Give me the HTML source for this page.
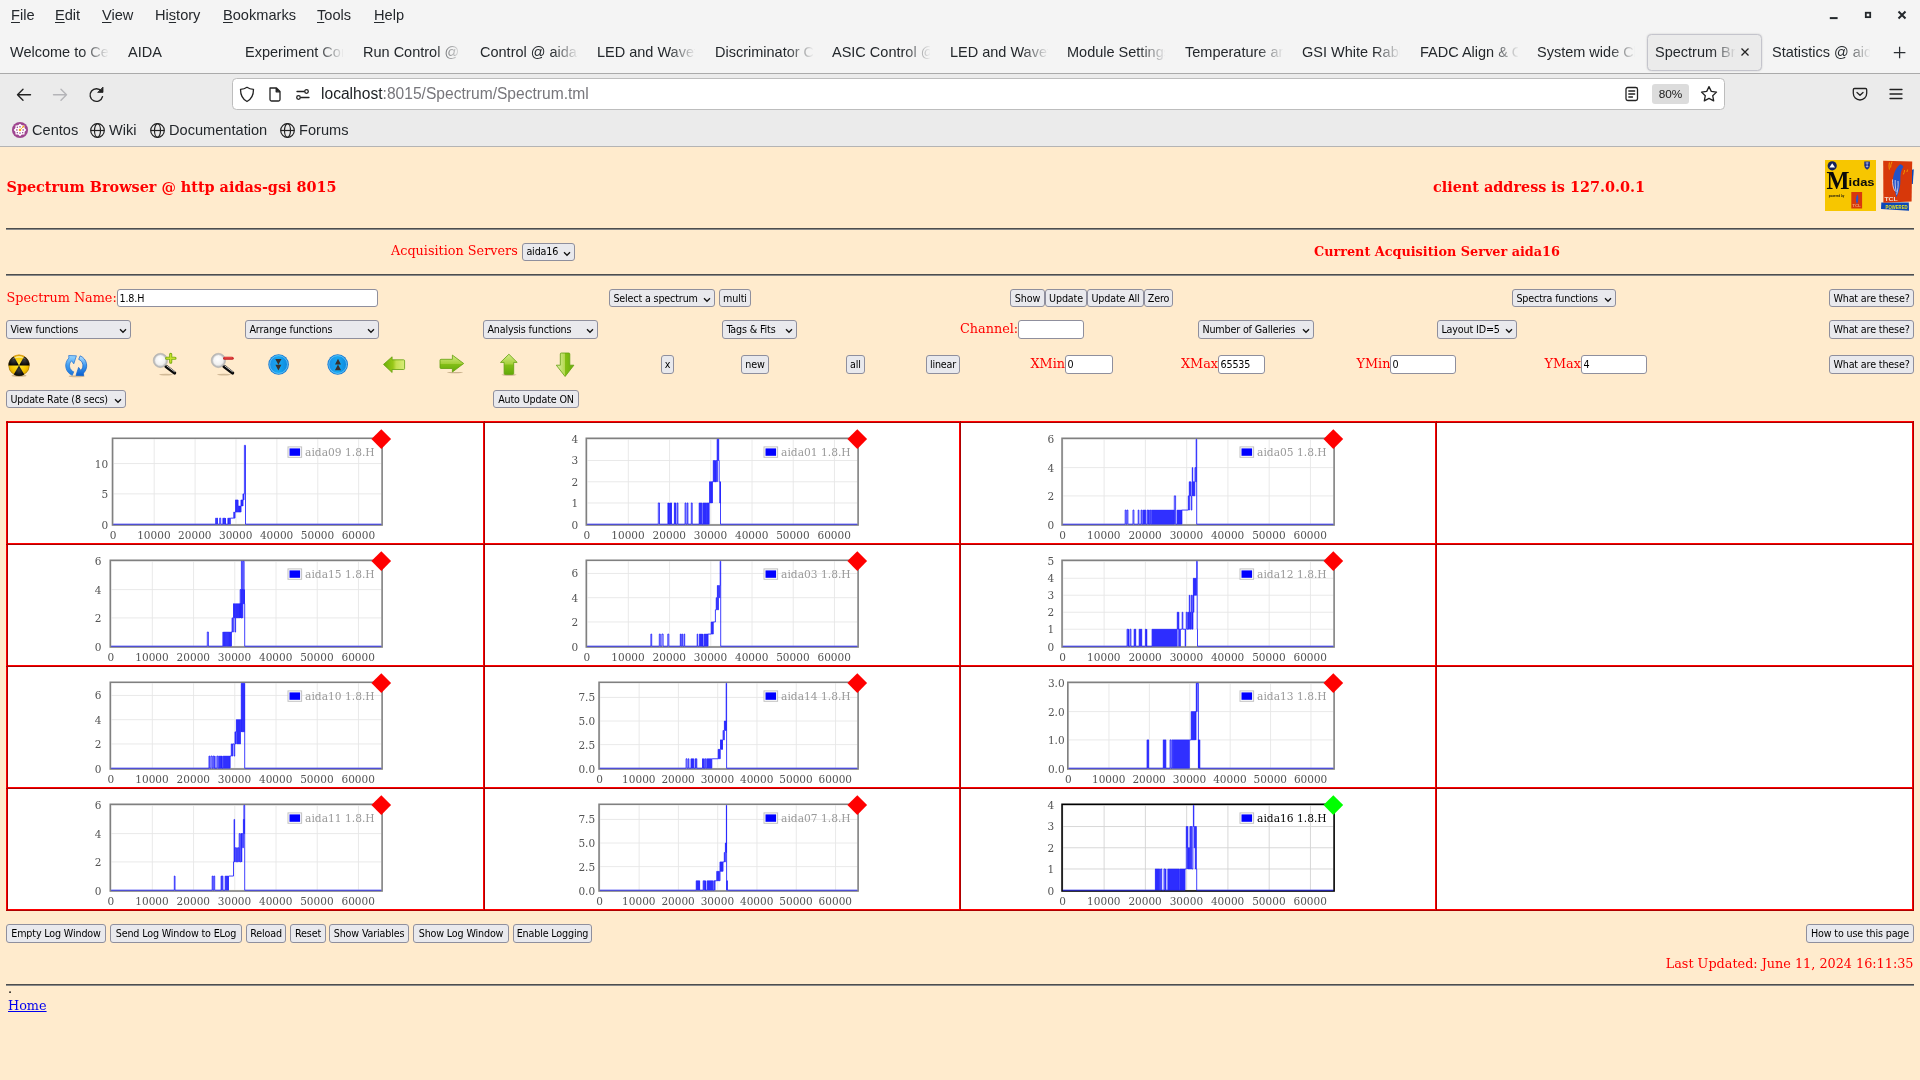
<!DOCTYPE html>
<html lang="en"><head><meta charset="utf-8"><title>Spectrum Browser</title>
<style>
html,body{margin:0;padding:0;}
body{width:1920px;height:1080px;overflow:hidden;position:relative;background:#ffebcd;font-family:"DejaVu Serif","Liberation Serif",serif;font-size:12.8px;color:#000;}
#root{position:absolute;left:0;top:0;width:1920px;height:1080px;overflow:hidden;will-change:transform;}
.abs{position:absolute;white-space:nowrap;}
/* browser chrome */
#chrome{position:absolute;left:0;top:0;width:1920px;height:147px;font-family:"Liberation Sans","DejaVu Sans",sans-serif;color:#24282c;}
#topbar{position:absolute;left:0;top:0;width:1920px;height:73px;background:#f4f4f4;}
#navbar{position:absolute;left:0;top:73px;width:1920px;height:73px;background:#ebebeb;border-top:1px solid #aaaaaa;box-sizing:border-box;}
#chromeline{position:absolute;left:0;top:146px;width:1920px;height:1px;background:#b4b4b4;}
.menu{position:absolute;top:6px;font-size:14.6px;line-height:18px;}
.menu u{text-decoration:underline;text-underline-offset:2px;text-decoration-thickness:1px;}
.tab{position:absolute;top:42px;height:20px;line-height:20px;font-size:14.5px;width:98px;overflow:hidden;white-space:nowrap;-webkit-mask-image:linear-gradient(to right,#000 72px,transparent 99px);mask-image:linear-gradient(to right,#000 72px,transparent 99px);}
#acttab{position:absolute;left:1646.5px;top:33.5px;width:115px;height:37px;box-sizing:border-box;background:#ebebeb;border:1px solid #c4c4cc;border-radius:4.5px;box-shadow:0 0 2px rgba(0,0,0,.18);}
#urlbar{position:absolute;left:231.5px;top:78px;width:1493px;height:32px;box-sizing:border-box;background:#fff;border:1px solid #bdbdbd;border-radius:4.5px;}
.bm{position:absolute;top:121px;font-size:14.6px;line-height:18px;}
/* form widgets */
.btn,.sel,.inp{position:absolute;box-sizing:border-box;font-family:"DejaVu Sans Condensed","DejaVu Sans","Liberation Sans",sans-serif;font-size:10.67px;white-space:nowrap;color:#000;border:1px solid #8f8f9d;border-radius:3px;height:18px;line-height:16px;letter-spacing:-0.15px;}
.btn{background:#e9e9ed;text-align:center;}
.sel{background:#e9e9ed;padding-left:3.4px;}
.sel svg{position:absolute;right:3.5px;top:6.5px;}
.inp{background:#fff;padding-left:1.5px;}
.red{color:#ff0000;}
hr.h{position:absolute;left:6px;width:1908px;height:0;margin:0;border:0;border-top:1px solid #4d4d4d;border-bottom:1px solid #8a8a8a;}
/* table */
#tbl{position:absolute;left:6px;top:421px;width:1908px;height:490px;background:#cc0000;}
.cell{position:absolute;background:#fff;}
.tick{font-family:"DejaVu Serif","Liberation Serif",serif;font-size:10.5px;fill:#545454;}
.leg{font-family:"DejaVu Serif","Liberation Serif",serif;font-size:10.67px;}

</style></head>
<body>
<div id="root">
<div id="chrome"><div id="topbar"></div><div id="navbar"></div><div id="chromeline"></div>
<div class="menu" style="left:11px"><u>F</u>ile</div>
<div class="menu" style="left:55px"><u>E</u>dit</div>
<div class="menu" style="left:102px"><u>V</u>iew</div>
<div class="menu" style="left:155px">Hi<u>s</u>tory</div>
<div class="menu" style="left:223px"><u>B</u>ookmarks</div>
<div class="menu" style="left:317px"><u>T</u>ools</div>
<div class="menu" style="left:374px"><u>H</u>elp</div>
<svg class="abs" style="left:1820px;top:4px" width="96" height="24" viewBox="0 0 96 24"><rect x="9.8" y="13.1" width="7.8" height="2" fill="#24282c"/><rect x="45.8" y="8.75" width="4.4" height="4.4" fill="none" stroke="#24282c" stroke-width="1.8"/><path d="M78.5 7.5 L85.5 14.5 M85.5 7.5 L78.5 14.5" stroke="#24282c" stroke-width="2" fill="none"/></svg>
<div class="tab" style="left:10px">Welcome to CentOS</div>
<div class="tab" style="left:128px">AIDA</div>
<div class="tab" style="left:245px">Experiment Control</div>
<div class="tab" style="left:363px">Run Control @ aida</div>
<div class="tab" style="left:480px">Control @ aidas</div>
<div class="tab" style="left:597px">LED and Waveform</div>
<div class="tab" style="left:715px">Discriminator Control</div>
<div class="tab" style="left:832px">ASIC Control @ aida</div>
<div class="tab" style="left:950px">LED and Waveform</div>
<div class="tab" style="left:1067px">Module Settings</div>
<div class="tab" style="left:1185px">Temperature and</div>
<div class="tab" style="left:1302px">GSI White Rabbit</div>
<div class="tab" style="left:1420px">FADC Align &amp; Control</div>
<div class="tab" style="left:1537px">System wide Checks</div>
<div class="tab" style="left:1772px">Statistics @ aidas</div>
<div id="acttab"></div>
<div class="tab" style="left:1655px;width:82px;-webkit-mask-image:linear-gradient(to right,#000 58px,transparent 81px);mask-image:linear-gradient(to right,#000 58px,transparent 81px)">Spectrum Browser</div>
<svg class="abs" style="left:1739px;top:46px" width="12" height="12" viewBox="0 0 12 12"><path d="M2.5 2.5 L9.5 9.5 M9.5 2.5 L2.5 9.5" stroke="#222" stroke-width="1.3" fill="none"/></svg>
<svg class="abs" style="left:1892px;top:45px" width="15" height="15" viewBox="-0.6 -0.5 15 15"><path d="M7 1.2 V12.8 M1.2 7 H12.8" stroke="#2a2e32" stroke-width="1.25" fill="none"/></svg>
<svg class="abs" style="left:14px;top:84px" width="101" height="21" viewBox="0 -0.8 101 21" fill="none" stroke-linecap="round" stroke-linejoin="round"><path d="M3.5 10 H16.5 M9 4.5 L3.5 10 L9 15.5" stroke="#222" stroke-width="1.4"/><path d="M39.5 10 H52.5 M47 4.5 L52.5 10 L47 15.5" stroke="#b4b4b8" stroke-width="1.4"/><path d="M87.4 6.4 A6.3 6.3 0 1 0 88.5 11.8" stroke="#222" stroke-width="1.4"/><path d="M89 2.6 V7.6 H84 Z" fill="#222" stroke="#222" stroke-width=".8"/></svg>
<div id="urlbar"></div>
<svg class="abs" style="left:238px;top:84px" width="81" height="21" viewBox="0 -0.5 81 21" fill="none" stroke="#222" stroke-width="1.3" stroke-linejoin="round" stroke-linecap="round"><path d="M9 2.8 C11 4.3 13 4.8 15.5 4.8 C15.5 10.5 14 14.5 9 17 C4 14.5 2.5 10.5 2.5 4.8 C5 4.8 7 4.3 9 2.8 Z"/><path d="M32 3.5 H38.5 L42 7 V15 Q42 16.5 40.5 16.5 H33.5 Q32 16.5 32 15 Z M38.2 3.7 V7.3 H41.8" /><path d="M38.4 3.9 L41.6 7.1 H38.4 Z" fill="#222" stroke="none"/><path d="M59 7 H66 M63 13 H71"/><circle cx="68.5" cy="7" r="1.8"/><circle cx="60.5" cy="13" r="1.8"/></svg>
<div class="abs" style="left:321px;top:85px;font-size:15.6px;line-height:18px;color:#1c1f22">localhost<span style="color:#77767b">:8015/Spectrum/Spectrum.tml</span></div>
<svg class="abs" style="left:1623px;top:85px" width="18" height="18" viewBox="0 0 18 18" fill="none" stroke="#222" stroke-width="1.3" stroke-linecap="round"><rect x="3" y="2.5" width="11.5" height="13" rx="1.8"/><path d="M5.8 6 H11.7 M5.8 9 H11.7 M5.8 12 H9.5"/></svg>
<div class="abs" style="left:1652px;top:84px;width:37px;height:20px;border-radius:3px;background:#dcdcdc;font-size:11.8px;line-height:20px;text-align:center;color:#1c1c1c">80%</div>
<svg class="abs" style="left:1699px;top:84px" width="20" height="20" viewBox="0 0 20 20" fill="none" stroke="#222" stroke-width="1.3" stroke-linejoin="round"><path d="M10 2.6 L12.3 7.4 L17.5 8.1 L13.7 11.7 L14.7 16.9 L10 14.4 L5.3 16.9 L6.3 11.7 L2.5 8.1 L7.7 7.4 Z"/></svg>
<svg class="abs" style="left:1851px;top:85px" width="18" height="18" viewBox="0 0 18 18" fill="none" stroke="#222" stroke-width="1.3" stroke-linecap="round" stroke-linejoin="round"><path d="M3.5 3.5 H14.5 Q15.7 3.5 15.7 4.7 V8.3 A6.7 6.7 0 0 1 2.3 8.3 V4.7 Q2.3 3.5 3.5 3.5 Z"/><path d="M6 7.5 L9 10.3 L12 7.5"/></svg>
<svg class="abs" style="left:1888px;top:86px" width="16" height="16" viewBox="0 0 16 16" fill="none" stroke="#222" stroke-width="1.3" stroke-linecap="round"><path d="M2 3.5 H14 M2 8 H14 M2 12.5 H14"/></svg>
<svg class="abs" style="left:11px;top:121px" width="18" height="18" viewBox="-0.5 -0.45 18 18"><circle cx="8.5" cy="8.5" r="8.05" fill="#9f4690"/><polygon points="8.50,2.20 10.41,3.88 12.95,4.05 13.12,6.59 14.80,8.50 13.12,10.41 12.95,12.95 10.41,13.12 8.50,14.80 6.59,13.12 4.05,12.95 3.88,10.41 2.20,8.50 3.88,6.59 4.05,4.05 6.59,3.88" fill="#fff"/><rect x="7.70" y="4.50" width="1.6" height="1.6" fill="#b676ae"/><rect x="7.70" y="10.90" width="1.6" height="1.6" fill="#b676ae"/><rect x="4.50" y="7.70" width="1.6" height="1.6" fill="#b676ae"/><rect x="10.90" y="7.70" width="1.6" height="1.6" fill="#b676ae"/><circle cx="5.80" cy="5.80" r=".7" fill="#8c2f82"/><circle cx="5.80" cy="11.20" r=".7" fill="#8c2f82"/><circle cx="11.20" cy="11.20" r=".7" fill="#8c2f82"/><path d="M9.6 7.4 L11.4 5.6" stroke="#efa724" stroke-width="1"/><circle cx="11.9" cy="5.1" r="1" fill="#efa724"/><rect x="7.4" y="7.4" width="2.2" height="2.2" fill="#efa724"/></svg>
<svg class="abs" style="left:89px;top:122px" width="17" height="17" viewBox="0 0 17 17" fill="none" stroke="#222" stroke-width="1.2"><circle cx="8.5" cy="8.5" r="6.8"/><ellipse cx="8.5" cy="8.5" rx="3" ry="6.8"/><path d="M1.7 8.5 H15.3"/></svg>
<svg class="abs" style="left:149px;top:122px" width="17" height="17" viewBox="0 0 17 17" fill="none" stroke="#222" stroke-width="1.2"><circle cx="8.5" cy="8.5" r="6.8"/><ellipse cx="8.5" cy="8.5" rx="3" ry="6.8"/><path d="M1.7 8.5 H15.3"/></svg>
<svg class="abs" style="left:279px;top:122px" width="17" height="17" viewBox="0 0 17 17" fill="none" stroke="#222" stroke-width="1.2"><circle cx="8.5" cy="8.5" r="6.8"/><ellipse cx="8.5" cy="8.5" rx="3" ry="6.8"/><path d="M1.7 8.5 H15.3"/></svg>
<div class="bm" style="left:32px">Centos</div>
<div class="bm" style="left:109px">Wiki</div>
<div class="bm" style="left:169px">Documentation</div>
<div class="bm" style="left:299px">Forums</div>
</div>
<div class="abs red" style="left:6.5px;top:178px;line-height:15px;font-weight:bold;font-size:14.4px;line-height:17px">Spectrum Browser @ http aidas-gsi 8015</div>
<div class="abs red" style="left:1433px;top:178px;line-height:15px;font-weight:bold;font-size:14.4px;line-height:17px">client address is 127.0.0.1</div>
<svg class="abs" style="left:1825px;top:160px" width="51" height="51" viewBox="0 0 51 51"><rect width="51" height="51" fill="#f7c600"/><circle cx="7.2" cy="5.8" r="4.6" fill="#14225c"/><path d="M7.2 3.2 L10 7.6 H4.4 Z" fill="#fff"/><path d="M39.3 1.6 H44.9 V5.6 Q44.9 8.6 42.1 9.8 Q39.3 8.6 39.3 5.6 Z" fill="#1c2f86"/><path d="M40.6 3 H43.6 M42.1 2.4 V7.4 M40.8 6.6 H43.4" stroke="#cfd6f2" stroke-width=".7"/><text x="1.6" y="29.2" font-family="Liberation Serif,DejaVu Serif,serif" font-weight="bold" font-size="25.5" fill="#0a0a0a" textLength="23" lengthAdjust="spacingAndGlyphs">M</text><text x="23.6" y="26" font-family="Liberation Sans,DejaVu Sans,sans-serif" font-weight="bold" font-size="11.6" fill="#0a0a0a" textLength="26" lengthAdjust="spacingAndGlyphs">idas</text><text x="3.8" y="37" font-family="Liberation Sans,DejaVu Sans,sans-serif" font-weight="bold" font-size="3.4" fill="#111" textLength="15.5" lengthAdjust="spacingAndGlyphs">powered by</text><rect x="26.3" y="32" width="10.8" height="16.5" fill="#d8380c"/><path d="M32.6 34.2 C30.6 36.6 30.4 41.2 32 44.2 C33.4 41 33.8 37.2 32.6 34.2 Z" fill="#2b55c8"/><text x="27.2" y="47.2" font-family="Liberation Sans,sans-serif" font-weight="bold" font-size="2.6" fill="#f0a070" textLength="8.6" lengthAdjust="spacingAndGlyphs">TCL</text></svg>
<svg class="abs" style="left:1881px;top:160px" width="33" height="51" viewBox="0 0 33 51"><path d="M0.3 42.6 L27.8 42.4 L28 50.8 L0 49 Z" fill="#0b48b8"/><path d="M30.2 10 L32.8 9.2 L31.8 24 L30.4 24 Z" fill="#0b48b8"/><path d="M2.2 0.8 L31.2 1.6 L30.6 41.6 L2.4 42.8 Z" fill="#d7380a"/><path d="M19 4.2 C13.4 8.6 10.6 19 12.4 26.4 C13.6 30.4 15 33.4 15.4 37.4 C18 32 19.6 26 19.4 20 C19.2 14.6 20 10 22.4 6.8 C21.6 5.2 20.4 4.2 19 4.2 Z" fill="#2352c8"/><path d="M11.6 19.4 C11.2 23 12 27.4 13.6 30.8 M14.2 20 C14 24 14.4 28 15.2 32 M17 21 C17.4 25 17 30 15.6 34.6" stroke="#e8e4f0" stroke-width=".8" fill="none"/><path d="M8.4 2.4 Q7.6 6 8.4 9.6 M11 1.6 Q9.6 4.6 9.6 7.6 M23.6 10 Q23.4 12.4 22.4 14.4 M26.6 9.6 Q26.4 10.8 25.8 12" stroke="#f2a000" stroke-width=".9" fill="none"/><text x="3.4" y="40.6" font-family="Liberation Sans,sans-serif" font-weight="bold" font-size="5.8" fill="#f6ddd0" textLength="13.4" lengthAdjust="spacingAndGlyphs">TCL</text><text x="4.6" y="48.8" font-family="Liberation Sans,sans-serif" font-weight="bold" font-size="5.4" fill="#e8e020" textLength="22" lengthAdjust="spacingAndGlyphs">POWERED</text></svg>
<hr class="h" style="top:228px">
<div class="abs red" style="left:391px;top:243px;line-height:15px;">Acquisition Servers</div>
<div class="sel" style="left:522px;top:243px;width:53px;height:18px;line-height:16.6px">aida16<svg width="8" height="6" viewBox="0 0 8 6"><path d="M1 1.2 L4 4.3 L7 1.2" fill="none" stroke="#111" stroke-width="1.25"/></svg></div>
<div class="abs red" style="left:1314px;top:244px;line-height:15px;font-weight:bold">Current Acquisition Server aida16</div>
<hr class="h" style="top:274px">
<div class="abs red" style="left:6.5px;top:290.3px;line-height:15px;">Spectrum Name:</div>
<div class="inp" style="left:117px;top:289px;width:261px;height:18px;line-height:17px">1.8.H</div>
<div class="sel" style="left:609px;top:289px;width:106px;height:18.4px;line-height:18.2px">Select a spectrum<svg width="8" height="6" viewBox="0 0 8 6"><path d="M1 1.2 L4 4.3 L7 1.2" fill="none" stroke="#111" stroke-width="1.25"/></svg></div>
<div class="btn" style="left:719px;top:289px;width:32px;height:18px;line-height:17.4px">multi</div>
<div class="btn" style="left:1010px;top:289px;width:35px;height:18px;line-height:17.4px">Show</div>
<div class="btn" style="left:1045px;top:289px;width:42px;height:18px;line-height:17.4px">Update</div>
<div class="btn" style="left:1087px;top:289px;width:57px;height:18px;line-height:17.4px">Update All</div>
<div class="btn" style="left:1144px;top:289px;width:29px;height:18px;line-height:17.4px">Zero</div>
<div class="sel" style="left:1512px;top:289px;width:104px;height:18.4px;line-height:18.2px">Spectra functions<svg width="8" height="6" viewBox="0 0 8 6"><path d="M1 1.2 L4 4.3 L7 1.2" fill="none" stroke="#111" stroke-width="1.25"/></svg></div>
<div class="btn" style="left:1829px;top:289px;width:85px;height:18px;line-height:17.4px">What are these?</div>
<div class="sel" style="left:6px;top:320px;width:125px;height:19px;line-height:18.2px">View functions<svg width="8" height="6" viewBox="0 0 8 6"><path d="M1 1.2 L4 4.3 L7 1.2" fill="none" stroke="#111" stroke-width="1.25"/></svg></div>
<div class="sel" style="left:245px;top:320px;width:134px;height:19px;line-height:18.2px">Arrange functions<svg width="8" height="6" viewBox="0 0 8 6"><path d="M1 1.2 L4 4.3 L7 1.2" fill="none" stroke="#111" stroke-width="1.25"/></svg></div>
<div class="sel" style="left:483px;top:320px;width:115px;height:19px;line-height:18.2px">Analysis functions<svg width="8" height="6" viewBox="0 0 8 6"><path d="M1 1.2 L4 4.3 L7 1.2" fill="none" stroke="#111" stroke-width="1.25"/></svg></div>
<div class="sel" style="left:722px;top:320px;width:75px;height:19px;line-height:18.2px">Tags &amp; Fits<svg width="8" height="6" viewBox="0 0 8 6"><path d="M1 1.2 L4 4.3 L7 1.2" fill="none" stroke="#111" stroke-width="1.25"/></svg></div>
<div class="abs red" style="left:960px;top:321px;line-height:15px;">Channel:</div>
<div class="inp" style="left:1018px;top:320px;width:66px;height:19px;line-height:18px"></div>
<div class="sel" style="left:1198px;top:320px;width:116px;height:19px;line-height:18.2px">Number of Galleries<svg width="8" height="6" viewBox="0 0 8 6"><path d="M1 1.2 L4 4.3 L7 1.2" fill="none" stroke="#111" stroke-width="1.25"/></svg></div>
<div class="sel" style="left:1437px;top:320px;width:80px;height:19px;line-height:18.2px">Layout ID=5<svg width="8" height="6" viewBox="0 0 8 6"><path d="M1 1.2 L4 4.3 L7 1.2" fill="none" stroke="#111" stroke-width="1.25"/></svg></div>
<div class="btn" style="left:1829px;top:320px;width:85px;height:19px;line-height:18.4px">What are these?</div>
<svg width="0" height="0" style="position:absolute"><defs><radialGradient id="gY" cx="50%" cy="45%" r="60%"><stop offset="0" stop-color="#ffe93a"/><stop offset=".6" stop-color="#f6c700"/><stop offset="1" stop-color="#d79a00"/></radialGradient><radialGradient id="gK" cx="50%" cy="45%" r="60%"><stop offset="0" stop-color="#3a3a3a"/><stop offset=".7" stop-color="#141414"/><stop offset="1" stop-color="#000"/></radialGradient><linearGradient id="gHi" x1="0" y1="0" x2="0" y2="1"><stop offset="0" stop-color="#fff" stop-opacity=".75"/><stop offset="1" stop-color="#fff" stop-opacity="0"/></linearGradient><linearGradient id="gB1" x1="0" y1="0" x2="0" y2="1"><stop offset="0" stop-color="#9ad6ff"/><stop offset=".5" stop-color="#3f9df0"/><stop offset="1" stop-color="#1b73d6"/></linearGradient><linearGradient id="gB2" x1="0" y1="1" x2="0" y2="0"><stop offset="0" stop-color="#b8e2ff"/><stop offset=".5" stop-color="#3c97ee"/><stop offset="1" stop-color="#0a5fd0"/></linearGradient><radialGradient id="gLens" cx="45%" cy="40%" r="60%"><stop offset="0" stop-color="#ffffff"/><stop offset=".7" stop-color="#f1f1f1"/><stop offset="1" stop-color="#dcdcdc"/></radialGradient><linearGradient id="gC" x1="0" y1="0" x2="1" y2="0"><stop offset="0" stop-color="#1c8fe6"/><stop offset=".5" stop-color="#16a8f2"/><stop offset="1" stop-color="#0e86dc"/></linearGradient><linearGradient id="gGv" x1="0" y1="0" x2="0" y2="1"><stop offset="0" stop-color="#d2ea84"/><stop offset=".5" stop-color="#a5d03a"/><stop offset=".52" stop-color="#84bf18"/><stop offset="1" stop-color="#62aa08"/></linearGradient><linearGradient id="gGh" x1="0" y1="0" x2="1" y2="0"><stop offset="0" stop-color="#6aae08"/><stop offset=".45" stop-color="#98c818"/><stop offset=".6" stop-color="#c4e04e"/><stop offset="1" stop-color="#d8ec7a"/></linearGradient><linearGradient id="gGd" x1="0" y1="0" x2="1" y2="0"><stop offset="0" stop-color="#dff0a8"/><stop offset=".48" stop-color="#b4d850"/><stop offset=".5" stop-color="#84be14"/><stop offset="1" stop-color="#68ae0a"/></linearGradient></defs></svg>
<svg class="abs" style="left:7px;top:353px" width="25" height="25" viewBox="0 -0.5 25 25"><ellipse cx="12" cy="22.2" rx="7.5" ry="1.2" fill="#6b4a1a" opacity=".35"/><circle cx="12" cy="11.9" r="10.55" fill="url(#gY)"/><path d="M12 11.9 L1.45 11.90 A10.55 10.55 0 0 1 6.72 2.76 Z" fill="url(#gK)"/><path d="M12 11.9 L17.28 2.76 A10.55 10.55 0 0 1 22.55 11.90 Z" fill="url(#gK)"/><path d="M12 11.9 L17.28 21.04 A10.55 10.55 0 0 1 6.73 21.04 Z" fill="url(#gK)"/><circle cx="12" cy="11.9" r="10.3" fill="none" stroke="#4a3500" stroke-opacity=".55" stroke-width=".5"/><path d="M4.4 6.7 A9.4 9.4 0 0 1 19.6 6.7 A14 14 0 0 0 4.4 6.7 Z" fill="url(#gHi)"/><path d="M6.2 3.3000000000000007 A10.4 10.4 0 0 1 17.8 3.3000000000000007" fill="none" stroke="#f5a623" stroke-width=".7" opacity=".9"/></svg>
<svg class="abs" style="left:64px;top:353px" width="25" height="25" viewBox="-0.2 -0.6 25 25"><ellipse cx="12.5" cy="22.6" rx="8" ry="1" fill="#6b4a1a" opacity=".3"/><path d="M8.07 21.74 A10.5 10.5 0 0 1 4.71 4.45 L4.5 1.9 L12.2 2.2 L9.6 10.2 L7.35 7.18 A6.7 6.7 0 0 0 9.49 18.21 Z" fill="url(#gB1)" stroke="#1d6fd0" stroke-width=".7" stroke-linejoin="round"/><g transform="rotate(180 12 12)"><path d="M8.07 21.74 A10.5 10.5 0 0 1 4.71 4.45 L4.5 1.9 L12.2 2.2 L9.6 10.2 L7.35 7.18 A6.7 6.7 0 0 0 9.49 18.21 Z" fill="url(#gB2)" stroke="#0f5ec8" stroke-width=".7" stroke-linejoin="round"/></g></svg>
<svg class="abs" style="left:152px;top:351px" width="27" height="26" viewBox="0 0 27 26"><ellipse cx="14" cy="23.6" rx="7" ry=".9" fill="#6b4a1a" opacity=".3"/><path d="M14 15.4 L22.6 22" stroke="#0a0a0a" stroke-width="3.3" stroke-linecap="round"/><path d="M14.8 14.9 L22.4 20.6" stroke="#e8e8e8" stroke-width=".9" stroke-linecap="round"/><circle cx="8.4" cy="9.45" r="6.3" fill="url(#gLens)" stroke="#bababa" stroke-width="1.9"/><circle cx="8.4" cy="9.45" r="7.2" fill="none" stroke="#a6a6a6" stroke-width=".4"/><circle cx="8.4" cy="9.4" r="5.5" fill="none" stroke="#e4e4e4" stroke-width=".5"/><path d="M18.7 3.2 V11.3 M14.6 7.3 H23.0" stroke="#79ab12" stroke-width="3.1" stroke-linecap="round"/><path d="M18.7 3.4 V11.1 M14.8 7.3 H22.8" stroke="#c5e02c" stroke-width="1.4" stroke-linecap="round"/></svg>
<svg class="abs" style="left:210px;top:351px" width="27" height="26" viewBox="0 0 27 26"><ellipse cx="14" cy="23.6" rx="7" ry=".9" fill="#6b4a1a" opacity=".3"/><path d="M14 15.4 L22.6 22" stroke="#0a0a0a" stroke-width="3.3" stroke-linecap="round"/><path d="M14.8 14.9 L22.4 20.6" stroke="#e8e8e8" stroke-width=".9" stroke-linecap="round"/><circle cx="8.4" cy="9.45" r="6.3" fill="url(#gLens)" stroke="#bababa" stroke-width="1.9"/><circle cx="8.4" cy="9.45" r="7.2" fill="none" stroke="#a6a6a6" stroke-width=".4"/><circle cx="8.4" cy="9.4" r="5.5" fill="none" stroke="#e4e4e4" stroke-width=".5"/><path d="M14.6 7.2 H22.2" stroke="#c22020" stroke-width="3.0" stroke-linecap="round"/><path d="M14.8 6.9 H22" stroke="#f05050" stroke-width="1.3" stroke-linecap="round"/></svg>
<svg class="abs" style="left:267px;top:353px" width="23" height="23" viewBox="-0.6 -0.5 23 23"><circle cx="11" cy="11" r="10.3" fill="#1878d0"/><circle cx="11" cy="11" r="9.4" fill="url(#gC)"/><circle cx="11" cy="11" r="8.9" fill="none" stroke="#86d2fb" stroke-width=".7" opacity=".9"/><path d="M10.8 17 L7.8 11.3 H13.8 Z M10.8 11.2 L7.7 5.6 H13.9 Z" fill="#3a302c"/></svg>
<svg class="abs" style="left:326px;top:353px" width="23" height="23" viewBox="-0.7 -0.5 23 23"><circle cx="11" cy="11" r="10.3" fill="#1878d0"/><circle cx="11" cy="11" r="9.4" fill="url(#gC)"/><circle cx="11" cy="11" r="8.9" fill="none" stroke="#86d2fb" stroke-width=".7" opacity=".9"/><path d="M11.3 5.3 L14.3 11 H8.3 Z M11.3 11.1 L14.4 16.8 H8.2 Z" fill="#3a302c"/></svg>
<svg class="abs" style="left:382px;top:355px" width="24" height="20" viewBox="0 0 24 20"><path d="M1.5 9.4 L10.1 1.8 V4.8 H21.6 Q22.6 4.8 22.6 5.8 V13.5 Q22.6 14.5 21.6 14.5 H10.1 V17.5 Z" fill="url(#gGh)" stroke="#62a00e" stroke-width=".8" stroke-linejoin="round"/></svg>
<svg class="abs" style="left:439px;top:354px" width="26" height="20" viewBox="0 0 26 20"><ellipse cx="16" cy="18.6" rx="8" ry=".7" fill="#6b4a1a" opacity=".35"/><path d="M24.7 9.5 L13.4 1.1 V5.3 H2 Q1 5.3 1 6.3 V13.5 Q1 14.5 2 14.5 H13.4 V18 Z" fill="url(#gGv)" stroke="#62a00e" stroke-width=".8" stroke-linejoin="round"/></svg>
<svg class="abs" style="left:499px;top:353px" width="20" height="24" viewBox="0 0 20 24"><ellipse cx="10" cy="21.8" rx="7.5" ry=".9" fill="#6b4a1a" opacity=".35"/><path d="M9.9 1.2 L18.2 9.4 H14.7 V20.4 Q14.7 21.4 13.7 21.4 H6.1 Q5.1 21.4 5.1 20.4 V9.4 H1.5 Z" fill="url(#gGv)" stroke="#62a00e" stroke-width=".8" stroke-linejoin="round"/></svg>
<svg class="abs" style="left:555px;top:352px" width="21" height="26" viewBox="0 0 21 26"><path d="M10.1 24.5 L1.3 13.2 H5.3 V2 Q5.3 1 6.3 1 H13.8 Q14.8 1 14.8 2 V13.2 H18.9 Z" fill="url(#gGd)" stroke="#62a00e" stroke-width=".8" stroke-linejoin="round"/></svg>
<div class="btn" style="left:661px;top:355px;width:13px;height:19px;line-height:18.4px">x</div>
<div class="btn" style="left:741px;top:355px;width:28px;height:19px;line-height:18.4px">new</div>
<div class="btn" style="left:846px;top:355px;width:19px;height:19px;line-height:18.4px">all</div>
<div class="btn" style="left:926px;top:355px;width:34px;height:19px;line-height:18.4px">linear</div>
<div class="abs red" style="left:1030.5px;top:356px;line-height:15px;">XMin</div>
<div class="inp" style="left:1065px;top:355px;width:48px;height:19px;line-height:18px">0</div>
<div class="abs red" style="left:1181px;top:356px;line-height:15px;">XMax</div>
<div class="inp" style="left:1218px;top:355px;width:47px;height:19px;line-height:18px">65535</div>
<div class="abs red" style="left:1356.5px;top:356px;line-height:15px;">YMin</div>
<div class="inp" style="left:1390px;top:355px;width:66px;height:19px;line-height:18px">0</div>
<div class="abs red" style="left:1544.5px;top:356px;line-height:15px;">YMax</div>
<div class="inp" style="left:1581px;top:355px;width:66px;height:19px;line-height:18px">4</div>
<div class="btn" style="left:1829px;top:355px;width:85px;height:19px;line-height:18.4px">What are these?</div>
<div class="sel" style="left:6px;top:390px;width:120px;height:18.4px;line-height:18.2px">Update Rate (8 secs)<svg width="8" height="6" viewBox="0 0 8 6"><path d="M1 1.2 L4 4.3 L7 1.2" fill="none" stroke="#111" stroke-width="1.25"/></svg></div>
<div class="btn" style="left:493px;top:390px;width:86px;height:18px;line-height:17.4px">Auto Update ON</div>
<div class="btn" style="left:6px;top:924px;width:100px;height:19px;line-height:18.4px">Empty Log Window</div>
<div class="btn" style="left:110px;top:924px;width:132px;height:19px;line-height:18.4px">Send Log Window to ELog</div>
<div class="btn" style="left:246px;top:924px;width:40px;height:19px;line-height:18.4px">Reload</div>
<div class="btn" style="left:290px;top:924px;width:36px;height:19px;line-height:18.4px">Reset</div>
<div class="btn" style="left:329px;top:924px;width:80px;height:19px;line-height:18.4px">Show Variables</div>
<div class="btn" style="left:413px;top:924px;width:96px;height:19px;line-height:18.4px">Show Log Window</div>
<div class="btn" style="left:513px;top:924px;width:79px;height:19px;line-height:18.4px">Enable Logging</div>
<div class="btn" style="left:1806px;top:924px;width:108px;height:19px;line-height:18.4px">How to use this page</div>
<div class="abs red" style="right:6.5px;top:956px;line-height:15px">Last Updated: June 11, 2024 16:11:35</div>
<hr class="h" style="top:984px">
<div class="abs" style="left:8px;top:981px;line-height:15px;font-size:12.8px">.</div>
<div class="abs" style="left:8px;top:998px;line-height:15px;color:#0000ee;text-decoration:underline">Home</div>
<div class="abs" style="left:6px;top:421px;width:1908px;height:490px;background:#ff0000"></div>
<div class="abs" style="left:7px;top:421px;width:1px;height:490px;background:#ad0000"></div>
<div class="abs" style="left:484px;top:421px;width:1px;height:490px;background:#ad0000"></div>
<div class="abs" style="left:960px;top:421px;width:1px;height:490px;background:#ad0000"></div>
<div class="abs" style="left:1436px;top:421px;width:1px;height:490px;background:#ad0000"></div>
<div class="abs" style="left:1913px;top:421px;width:1px;height:490px;background:#ad0000"></div>
<div class="abs" style="left:6px;top:422px;width:1908px;height:1px;background:#ad0000"></div>
<div class="abs" style="left:6px;top:544px;width:1908px;height:1px;background:#ad0000"></div>
<div class="abs" style="left:6px;top:666px;width:1908px;height:1px;background:#ad0000"></div>
<div class="abs" style="left:6px;top:788px;width:1908px;height:1px;background:#ad0000"></div>
<div class="abs" style="left:6px;top:910px;width:1908px;height:1px;background:#ad0000"></div>
<div class="abs" style="left:8px;top:423px;width:475px;height:120px;background:#fff"></div>
<div class="abs" style="left:8px;top:545px;width:475px;height:120px;background:#fff"></div>
<div class="abs" style="left:8px;top:667px;width:475px;height:120px;background:#fff"></div>
<div class="abs" style="left:8px;top:789px;width:475px;height:120px;background:#fff"></div>
<div class="abs" style="left:485px;top:423px;width:474px;height:120px;background:#fff"></div>
<div class="abs" style="left:485px;top:545px;width:474px;height:120px;background:#fff"></div>
<div class="abs" style="left:485px;top:667px;width:474px;height:120px;background:#fff"></div>
<div class="abs" style="left:485px;top:789px;width:474px;height:120px;background:#fff"></div>
<div class="abs" style="left:961px;top:423px;width:474px;height:120px;background:#fff"></div>
<div class="abs" style="left:961px;top:545px;width:474px;height:120px;background:#fff"></div>
<div class="abs" style="left:961px;top:667px;width:474px;height:120px;background:#fff"></div>
<div class="abs" style="left:961px;top:789px;width:474px;height:120px;background:#fff"></div>
<div class="abs" style="left:1437px;top:423px;width:475px;height:120px;background:#fff"></div>
<div class="abs" style="left:1437px;top:545px;width:475px;height:120px;background:#fff"></div>
<div class="abs" style="left:1437px;top:667px;width:475px;height:120px;background:#fff"></div>
<div class="abs" style="left:1437px;top:789px;width:475px;height:120px;background:#fff"></div>
<svg class="abs" style="left:0;top:0" width="1920" height="1080" viewBox="0 0 1920 1080">
<path d="M113.30 439.30 V524.20 M154.19 439.30 V524.20 M195.09 439.30 V524.20 M235.98 439.30 V524.20 M276.88 439.30 V524.20 M317.77 439.30 V524.20 M358.67 439.30 V524.20 M113.30 524.20 H381.30 M113.30 493.88 H381.30 M113.30 463.56 H381.30" stroke="#e6e6e6" stroke-width="0.9" fill="none"/>
<rect x="112.50" y="438.30" width="269.60" height="86.70" fill="none" stroke="#808080" stroke-width="1.6"/>
<path d="M113.30 524.20 L215.70 524.20 L215.70 518.14 L216.30 518.14 L216.30 524.20 L216.90 524.20 L216.90 518.14 L217.50 518.14 L217.50 524.20 L217.90 524.20 L217.90 524.20 L219.70 524.20 L219.70 518.14 L220.70 518.14 L220.70 524.20 L222.90 524.20 L222.90 518.14 L223.50 518.14 L223.50 524.20 L224.10 524.20 L224.10 518.14 L224.70 518.14 L224.70 524.20 L225.30 524.20 L225.30 518.14 L225.40 518.14 L225.40 524.20 L227.90 524.20 L227.90 518.14 L228.50 518.14 L228.50 524.20 L229.10 524.20 L229.10 518.14 L229.70 518.14 L229.70 524.20 L230.30 524.20 L230.30 518.14 L230.80 518.14 L230.80 518.14 L233.80 518.14 L233.80 512.07 L234.40 512.07 L234.40 518.14 L235.00 518.14 L235.00 512.07 L235.50 512.07 L235.50 512.07 L235.60 512.07 L235.60 499.94 L236.10 499.94 L236.10 512.07 L236.60 512.07 L236.60 499.94 L237.10 499.94 L237.10 512.07 L237.60 512.07 L237.60 499.94 L238.00 499.94 L238.00 506.01 L238.50 506.01 L238.50 512.07 L239.00 512.07 L239.00 506.01 L239.50 506.01 L239.50 512.07 L240.00 512.07 L240.00 506.01 L240.50 506.01 L240.50 512.07 L241.00 512.07 L241.00 499.94 L241.50 499.94 L241.50 506.01 L242.00 506.01 L242.00 499.94 L242.50 499.94 L242.50 506.01 L243.00 506.01 L243.00 493.88 L243.50 493.88 L243.50 499.94 L244.00 499.94 L244.00 493.88 L244.40 493.88 L244.40 445.36 L245.50 445.36 L245.50 524.20 L381.30 524.20" stroke="#1f1fff" stroke-width="0.85" fill="none" stroke-linejoin="miter"/>
<text class="tick" x="113.0" y="538.9" text-anchor="middle">0</text>
<text class="tick" x="153.9" y="538.9" text-anchor="middle">10000</text>
<text class="tick" x="194.8" y="538.9" text-anchor="middle">20000</text>
<text class="tick" x="235.7" y="538.9" text-anchor="middle">30000</text>
<text class="tick" x="276.6" y="538.9" text-anchor="middle">40000</text>
<text class="tick" x="317.5" y="538.9" text-anchor="middle">50000</text>
<text class="tick" x="358.4" y="538.9" text-anchor="middle">60000</text>
<text class="tick" x="108.2" y="529.1" text-anchor="end">0</text>
<text class="tick" x="108.2" y="497.8" text-anchor="end">5</text>
<text class="tick" x="108.2" y="467.5" text-anchor="end">10</text>
<rect x="288.0" y="446.9" width="13.6" height="10.4" fill="#fff" stroke="#c2c2c2" stroke-width="1"/>
<rect x="289.5" y="448.4" width="10.6" height="7.4" fill="#0000ff"/>
<text class="leg" x="305.1" y="456.0" fill="#999">aida09 1.8.H</text>
<path d="M381.3 429.2 L391.1 439.1 L381.3 448.9 L371.4 439.1 Z" fill="#ff0000"/>
<path d="M111.10 561.30 V646.20 M152.33 561.30 V646.20 M193.56 561.30 V646.20 M234.79 561.30 V646.20 M276.02 561.30 V646.20 M317.25 561.30 V646.20 M358.48 561.30 V646.20 M111.10 646.20 H381.30 M111.10 617.90 H381.30 M111.10 589.60 H381.30 M111.10 561.30 H381.30" stroke="#e6e6e6" stroke-width="0.9" fill="none"/>
<rect x="110.30" y="560.30" width="271.80" height="86.70" fill="none" stroke="#808080" stroke-width="1.6"/>
<path d="M111.10 646.20 L207.30 646.20 L207.30 632.05 L208.40 632.05 L208.40 646.20 L222.90 646.20 L222.90 632.05 L223.45 632.05 L223.45 646.20 L224.00 646.20 L224.00 632.05 L224.55 632.05 L224.55 646.20 L225.10 646.20 L225.10 632.05 L225.65 632.05 L225.65 646.20 L226.20 646.20 L226.20 632.05 L226.75 632.05 L226.75 646.20 L227.30 646.20 L227.30 632.05 L227.85 632.05 L227.85 646.20 L228.40 646.20 L228.40 632.05 L228.95 632.05 L228.95 646.20 L229.50 646.20 L229.50 632.05 L230.05 632.05 L230.05 646.20 L230.60 646.20 L230.60 632.05 L231.15 632.05 L231.15 646.20 L231.25 646.20 L231.25 632.05 L232.10 632.05 L232.10 617.90 L232.70 617.90 L232.70 632.05 L233.30 632.05 L233.30 617.90 L233.40 617.90 L233.40 617.90 L233.50 617.90 L233.50 603.75 L234.00 603.75 L234.00 617.90 L234.50 617.90 L234.50 603.75 L235.00 603.75 L235.00 632.05 L235.60 632.05 L235.60 617.90 L235.60 617.90 L235.60 603.75 L236.10 603.75 L236.10 617.90 L236.60 617.90 L236.60 603.75 L237.10 603.75 L237.10 617.90 L237.60 617.90 L237.60 603.75 L238.10 603.75 L238.10 617.90 L238.60 617.90 L238.60 603.75 L239.10 603.75 L239.10 617.90 L239.60 617.90 L239.60 603.75 L240.10 603.75 L240.10 617.90 L240.20 617.90 L240.20 589.60 L241.00 589.60 L241.00 617.90 L241.30 617.90 L241.30 589.60 L241.80 589.60 L241.80 603.75 L242.30 603.75 L242.30 589.60 L242.80 589.60 L242.80 603.75 L243.30 603.75 L243.30 589.60 L243.80 589.60 L243.80 603.75 L244.30 603.75 L244.30 589.60 L244.40 589.60 L244.40 603.75 L244.70 603.75 L244.70 646.20 L381.30 646.20" stroke="#1f1fff" stroke-width="0.85" fill="none" stroke-linejoin="miter"/>
<path d="M241.40 589.60 L241.40 589.60 L241.40 561.30 L242.30 561.30 L242.30 589.60 L243.20 589.60 L243.20 561.30 L244.10 561.30 L244.10 589.60 L244.20 589.60 L244.20 589.60" stroke="#1f1fff" stroke-width="0.85" fill="none"/>
<path d="M240.20 617.90 L240.20 617.90 L240.20 603.75 L241.30 603.75 L241.30 617.90 L242.40 617.90 L242.40 603.75 L242.80 603.75 L242.80 617.90" stroke="#1f1fff" stroke-width="0.85" fill="none"/>
<text class="tick" x="110.8" y="660.9" text-anchor="middle">0</text>
<text class="tick" x="152.0" y="660.9" text-anchor="middle">10000</text>
<text class="tick" x="193.3" y="660.9" text-anchor="middle">20000</text>
<text class="tick" x="234.5" y="660.9" text-anchor="middle">30000</text>
<text class="tick" x="275.7" y="660.9" text-anchor="middle">40000</text>
<text class="tick" x="316.9" y="660.9" text-anchor="middle">50000</text>
<text class="tick" x="358.2" y="660.9" text-anchor="middle">60000</text>
<text class="tick" x="101.4" y="651.1" text-anchor="end">0</text>
<text class="tick" x="101.4" y="621.8" text-anchor="end">2</text>
<text class="tick" x="101.4" y="593.5" text-anchor="end">4</text>
<text class="tick" x="101.4" y="565.2" text-anchor="end">6</text>
<rect x="288.0" y="568.9" width="13.6" height="10.4" fill="#fff" stroke="#c2c2c2" stroke-width="1"/>
<rect x="289.5" y="570.4" width="10.6" height="7.4" fill="#0000ff"/>
<text class="leg" x="305.1" y="578.0" fill="#999">aida15 1.8.H</text>
<path d="M381.3 551.2 L391.1 561.0 L381.3 570.9 L371.4 561.0 Z" fill="#ff0000"/>
<path d="M111.10 683.30 V768.20 M152.33 683.30 V768.20 M193.56 683.30 V768.20 M234.79 683.30 V768.20 M276.02 683.30 V768.20 M317.25 683.30 V768.20 M358.48 683.30 V768.20 M111.10 768.20 H381.30 M111.10 743.94 H381.30 M111.10 719.69 H381.30 M111.10 695.43 H381.30" stroke="#e6e6e6" stroke-width="0.9" fill="none"/>
<rect x="110.30" y="682.30" width="271.80" height="86.70" fill="none" stroke="#808080" stroke-width="1.6"/>
<path d="M111.10 768.20 L209.00 768.20 L209.00 756.07 L209.70 756.07 L209.70 768.20 L210.40 768.20 L210.40 768.20 L210.90 768.20 L210.90 756.07 L212.00 756.07 L212.00 768.20 L212.90 768.20 L212.90 756.07 L213.80 756.07 L213.80 768.20 L214.70 768.20 L214.70 756.07 L215.00 756.07 L215.00 768.20 L216.90 768.20 L216.90 756.07 L217.80 756.07 L217.80 768.20 L218.75 768.20 L218.75 756.07 L219.30 756.07 L219.30 768.20 L219.85 768.20 L219.85 756.07 L220.40 756.07 L220.40 768.20 L220.95 768.20 L220.95 756.07 L221.50 756.07 L221.50 768.20 L222.05 768.20 L222.05 756.07 L222.10 756.07 L222.10 768.20 L223.30 768.20 L223.30 756.07 L223.80 756.07 L223.80 768.20 L224.30 768.20 L224.30 756.07 L224.80 756.07 L224.80 768.20 L225.30 768.20 L225.30 756.07 L225.80 756.07 L225.80 768.20 L226.30 768.20 L226.30 756.07 L226.80 756.07 L226.80 768.20 L227.30 768.20 L227.30 756.07 L227.80 756.07 L227.80 768.20 L228.30 768.20 L228.30 756.07 L228.80 756.07 L228.80 768.20 L229.30 768.20 L229.30 756.07 L229.80 756.07 L229.80 768.20 L230.00 768.20 L230.00 756.07 L231.30 756.07 L231.30 743.94 L231.90 743.94 L231.90 756.07 L232.50 756.07 L232.50 743.94 L234.00 743.94 L234.00 756.07 L234.70 756.07 L234.70 743.94 L235.00 743.94 L235.00 731.81 L235.50 731.81 L235.50 743.94 L236.00 743.94 L236.00 731.81 L236.40 731.81 L236.40 719.69 L236.90 719.69 L236.90 743.94 L237.40 743.94 L237.40 719.69 L237.90 719.69 L237.90 743.94 L238.40 743.94 L238.40 719.69 L238.90 719.69 L238.90 743.94 L239.40 743.94 L239.40 719.69 L239.90 719.69 L239.90 743.94 L240.40 743.94 L240.40 719.69 L240.70 719.69 L240.70 719.69 L241.20 719.69 L241.20 731.81 L241.30 731.81 L241.30 683.30 L241.80 683.30 L241.80 731.81 L242.30 731.81 L242.30 683.30 L242.80 683.30 L242.80 731.81 L243.30 731.81 L243.30 683.30 L243.80 683.30 L243.80 731.81 L244.30 731.81 L244.30 683.30 L244.70 683.30 L244.70 768.20 L381.30 768.20" stroke="#1f1fff" stroke-width="0.85" fill="none" stroke-linejoin="miter"/>
<text class="tick" x="110.8" y="782.9" text-anchor="middle">0</text>
<text class="tick" x="152.0" y="782.9" text-anchor="middle">10000</text>
<text class="tick" x="193.3" y="782.9" text-anchor="middle">20000</text>
<text class="tick" x="234.5" y="782.9" text-anchor="middle">30000</text>
<text class="tick" x="275.7" y="782.9" text-anchor="middle">40000</text>
<text class="tick" x="316.9" y="782.9" text-anchor="middle">50000</text>
<text class="tick" x="358.2" y="782.9" text-anchor="middle">60000</text>
<text class="tick" x="101.4" y="773.1" text-anchor="end">0</text>
<text class="tick" x="101.4" y="747.8" text-anchor="end">2</text>
<text class="tick" x="101.4" y="723.6" text-anchor="end">4</text>
<text class="tick" x="101.4" y="699.3" text-anchor="end">6</text>
<rect x="288.0" y="690.9" width="13.6" height="10.4" fill="#fff" stroke="#c2c2c2" stroke-width="1"/>
<rect x="289.5" y="692.4" width="10.6" height="7.4" fill="#0000ff"/>
<text class="leg" x="305.1" y="700.0" fill="#999">aida10 1.8.H</text>
<path d="M381.3 673.2 L391.1 683.0 L381.3 692.9 L371.4 683.0 Z" fill="#ff0000"/>
<path d="M111.10 805.30 V890.20 M152.33 805.30 V890.20 M193.56 805.30 V890.20 M234.79 805.30 V890.20 M276.02 805.30 V890.20 M317.25 805.30 V890.20 M358.48 805.30 V890.20 M111.10 890.20 H381.30 M111.10 861.90 H381.30 M111.10 833.60 H381.30 M111.10 805.30 H381.30" stroke="#e6e6e6" stroke-width="0.9" fill="none"/>
<rect x="110.30" y="804.30" width="271.80" height="86.70" fill="none" stroke="#808080" stroke-width="1.6"/>
<path d="M111.10 890.20 L174.30 890.20 L174.30 876.05 L175.00 876.05 L175.00 890.20 L212.20 890.20 L212.20 876.05 L212.90 876.05 L212.90 890.20 L213.80 890.20 L213.80 876.05 L214.70 876.05 L214.70 890.20 L221.10 890.20 L221.10 876.05 L221.70 876.05 L221.70 890.20 L222.20 890.20 L222.20 876.05 L222.90 876.05 L222.90 890.20 L225.20 890.20 L225.20 876.05 L225.75 876.05 L225.75 890.20 L226.30 890.20 L226.30 876.05 L226.85 876.05 L226.85 890.20 L227.40 890.20 L227.40 876.05 L227.95 876.05 L227.95 890.20 L228.50 890.20 L228.50 876.05 L228.75 876.05 L228.75 876.05 L233.50 876.05 L233.50 861.90 L234.10 861.90 L234.10 819.45 L234.60 819.45 L234.60 861.90 L235.00 861.90 L235.00 847.75 L235.80 847.75 L235.80 861.90 L236.60 861.90 L236.60 847.75 L237.40 847.75 L237.40 861.90 L238.20 861.90 L238.20 847.75 L239.00 847.75 L239.00 861.90 L239.20 861.90 L239.20 833.60 L240.00 833.60 L240.00 861.90 L240.80 861.90 L240.80 833.60 L241.60 833.60 L241.60 861.90 L241.70 861.90 L241.70 833.60 L242.70 833.60 L242.70 847.75 L243.40 847.75 L243.40 819.45 L243.90 819.45 L243.90 833.60 L244.40 833.60 L244.40 819.45 L243.90 819.45 L243.90 805.30 L244.70 805.30 L244.70 890.20 L381.30 890.20" stroke="#1f1fff" stroke-width="0.85" fill="none" stroke-linejoin="miter"/>
<text class="tick" x="110.8" y="904.9" text-anchor="middle">0</text>
<text class="tick" x="152.0" y="904.9" text-anchor="middle">10000</text>
<text class="tick" x="193.3" y="904.9" text-anchor="middle">20000</text>
<text class="tick" x="234.5" y="904.9" text-anchor="middle">30000</text>
<text class="tick" x="275.7" y="904.9" text-anchor="middle">40000</text>
<text class="tick" x="316.9" y="904.9" text-anchor="middle">50000</text>
<text class="tick" x="358.2" y="904.9" text-anchor="middle">60000</text>
<text class="tick" x="101.4" y="895.1" text-anchor="end">0</text>
<text class="tick" x="101.4" y="865.8" text-anchor="end">2</text>
<text class="tick" x="101.4" y="837.5" text-anchor="end">4</text>
<text class="tick" x="101.4" y="809.2" text-anchor="end">6</text>
<rect x="288.0" y="812.9" width="13.6" height="10.4" fill="#fff" stroke="#c2c2c2" stroke-width="1"/>
<rect x="289.5" y="814.4" width="10.6" height="7.4" fill="#0000ff"/>
<text class="leg" x="305.1" y="822.0" fill="#999">aida11 1.8.H</text>
<path d="M381.3 795.2 L391.1 805.0 L381.3 814.9 L371.4 805.0 Z" fill="#ff0000"/>
<path d="M587.10 439.30 V524.20 M628.33 439.30 V524.20 M669.56 439.30 V524.20 M710.79 439.30 V524.20 M752.02 439.30 V524.20 M793.25 439.30 V524.20 M834.48 439.30 V524.20 M587.10 524.20 H857.30 M587.10 502.97 H857.30 M587.10 481.75 H857.30 M587.10 460.52 H857.30 M587.10 439.30 H857.30" stroke="#e6e6e6" stroke-width="0.9" fill="none"/>
<rect x="586.30" y="438.30" width="271.80" height="86.70" fill="none" stroke="#808080" stroke-width="1.6"/>
<path d="M587.10 524.20 L658.30 524.20 L658.30 502.97 L659.50 502.97 L659.50 524.20 L667.90 524.20 L667.90 502.97 L668.50 502.97 L668.50 524.20 L669.10 524.20 L669.10 502.97 L669.20 502.97 L669.20 524.20 L670.00 524.20 L670.00 502.97 L670.50 502.97 L670.50 524.20 L671.00 524.20 L671.00 502.97 L671.50 502.97 L671.50 524.20 L671.70 524.20 L671.70 524.20 L674.40 524.20 L674.40 502.97 L675.00 502.97 L675.00 524.20 L675.30 524.20 L675.30 502.97 L675.80 502.97 L675.80 524.20 L677.20 524.20 L677.20 502.97 L677.90 502.97 L677.90 524.20 L685.10 524.20 L685.10 502.97 L685.90 502.97 L685.90 524.20 L687.20 524.20 L687.20 502.97 L687.90 502.97 L687.90 524.20 L691.30 524.20 L691.30 502.97 L692.20 502.97 L692.20 524.20 L699.20 524.20 L699.20 502.97 L699.70 502.97 L699.70 524.20 L700.20 524.20 L700.20 502.97 L700.70 502.97 L700.70 524.20 L701.20 524.20 L701.20 502.97 L701.70 502.97 L701.70 524.20 L702.10 524.20 L702.10 524.20 L702.90 524.20 L702.90 502.97 L703.40 502.97 L703.40 524.20 L703.90 524.20 L703.90 502.97 L704.40 502.97 L704.40 524.20 L704.90 524.20 L704.90 502.97 L705.40 502.97 L705.40 524.20 L705.90 524.20 L705.90 502.97 L706.40 502.97 L706.40 524.20 L706.70 524.20 L706.70 524.20 L707.10 524.20 L707.10 502.97 L707.60 502.97 L707.60 524.20 L708.10 524.20 L708.10 502.97 L708.60 502.97 L708.60 524.20 L709.10 524.20 L709.10 502.97 L709.60 502.97 L709.60 481.75 L710.10 481.75 L710.10 502.97 L710.60 502.97 L710.60 481.75 L711.10 481.75 L711.10 502.97 L711.60 502.97 L711.60 481.75 L712.10 481.75 L712.10 502.97 L712.30 502.97 L712.30 481.75 L713.30 481.75 L713.30 460.52 L713.80 460.52 L713.80 481.75 L714.30 481.75 L714.30 460.52 L714.80 460.52 L714.80 481.75 L715.30 481.75 L715.30 460.52 L715.40 460.52 L715.40 481.75 L716.30 481.75 L716.30 460.52 L716.40 460.52 L716.40 460.52 L717.00 460.52 L717.00 481.75 L717.20 481.75 L717.20 439.30 L717.70 439.30 L717.70 460.52 L718.20 460.52 L718.20 439.30 L718.70 439.30 L718.70 460.52 L719.20 460.52 L719.20 481.75 L719.30 481.75 L719.30 481.75 L719.80 481.75 L719.80 502.97 L720.30 502.97 L720.30 481.75 L720.50 481.75 L720.50 524.20 L857.30 524.20" stroke="#1f1fff" stroke-width="0.85" fill="none" stroke-linejoin="miter"/>
<text class="tick" x="586.8" y="538.9" text-anchor="middle">0</text>
<text class="tick" x="628.0" y="538.9" text-anchor="middle">10000</text>
<text class="tick" x="669.3" y="538.9" text-anchor="middle">20000</text>
<text class="tick" x="710.5" y="538.9" text-anchor="middle">30000</text>
<text class="tick" x="751.7" y="538.9" text-anchor="middle">40000</text>
<text class="tick" x="792.9" y="538.9" text-anchor="middle">50000</text>
<text class="tick" x="834.2" y="538.9" text-anchor="middle">60000</text>
<text class="tick" x="578.1" y="529.1" text-anchor="end">0</text>
<text class="tick" x="578.1" y="506.9" text-anchor="end">1</text>
<text class="tick" x="578.1" y="485.6" text-anchor="end">2</text>
<text class="tick" x="578.1" y="464.4" text-anchor="end">3</text>
<text class="tick" x="578.1" y="443.2" text-anchor="end">4</text>
<rect x="764.0" y="446.9" width="13.6" height="10.4" fill="#fff" stroke="#c2c2c2" stroke-width="1"/>
<rect x="765.5" y="448.4" width="10.6" height="7.4" fill="#0000ff"/>
<text class="leg" x="781.1" y="456.0" fill="#999">aida01 1.8.H</text>
<path d="M857.3 429.2 L867.1 439.1 L857.3 448.9 L847.4 439.1 Z" fill="#ff0000"/>
<path d="M587.10 561.30 V646.20 M628.33 561.30 V646.20 M669.56 561.30 V646.20 M710.79 561.30 V646.20 M752.02 561.30 V646.20 M793.25 561.30 V646.20 M834.48 561.30 V646.20 M587.10 646.20 H857.30 M587.10 621.94 H857.30 M587.10 597.69 H857.30 M587.10 573.43 H857.30" stroke="#e6e6e6" stroke-width="0.9" fill="none"/>
<rect x="586.30" y="560.30" width="271.80" height="86.70" fill="none" stroke="#808080" stroke-width="1.6"/>
<path d="M587.10 646.20 L650.90 646.20 L650.90 634.07 L651.70 634.07 L651.70 646.20 L659.30 646.20 L659.30 634.07 L660.30 634.07 L660.30 646.20 L661.90 646.20 L661.90 634.07 L663.10 634.07 L663.10 646.20 L667.80 646.20 L667.80 634.07 L668.80 634.07 L668.80 646.20 L680.30 646.20 L680.30 634.07 L680.90 634.07 L680.90 646.20 L681.80 646.20 L681.80 634.07 L682.60 634.07 L682.60 646.20 L684.00 646.20 L684.00 634.07 L684.70 634.07 L684.70 646.20 L697.20 646.20 L697.20 634.07 L697.80 634.07 L697.80 646.20 L699.60 646.20 L699.60 634.07 L700.10 634.07 L700.10 646.20 L700.60 646.20 L700.60 634.07 L701.10 634.07 L701.10 646.20 L701.60 646.20 L701.60 634.07 L702.10 634.07 L702.10 646.20 L702.60 646.20 L702.60 634.07 L702.90 634.07 L702.90 646.20 L704.20 646.20 L704.20 634.07 L704.70 634.07 L704.70 646.20 L705.20 646.20 L705.20 634.07 L705.70 634.07 L705.70 646.20 L706.20 646.20 L706.20 634.07 L706.70 634.07 L706.70 646.20 L707.20 646.20 L707.20 634.07 L707.70 634.07 L707.70 646.20 L707.90 646.20 L707.90 634.07 L711.25 634.07 L711.25 621.94 L711.75 621.94 L711.75 634.07 L712.25 634.07 L712.25 621.94 L712.75 621.94 L712.75 634.07 L713.20 634.07 L713.20 621.94 L715.40 621.94 L715.40 609.81 L716.25 609.81 L716.25 597.69 L716.75 597.69 L716.75 609.81 L717.25 609.81 L717.25 597.69 L717.40 597.69 L717.40 585.56 L717.90 585.56 L717.90 609.81 L718.40 609.81 L718.40 585.56 L718.80 585.56 L718.80 585.56 L719.30 585.56 L719.30 597.69 L719.80 597.69 L719.80 585.56 L720.20 585.56 L720.20 561.30 L720.70 561.30 L720.70 646.20 L857.30 646.20" stroke="#1f1fff" stroke-width="0.85" fill="none" stroke-linejoin="miter"/>
<text class="tick" x="586.8" y="660.9" text-anchor="middle">0</text>
<text class="tick" x="628.0" y="660.9" text-anchor="middle">10000</text>
<text class="tick" x="669.3" y="660.9" text-anchor="middle">20000</text>
<text class="tick" x="710.5" y="660.9" text-anchor="middle">30000</text>
<text class="tick" x="751.7" y="660.9" text-anchor="middle">40000</text>
<text class="tick" x="792.9" y="660.9" text-anchor="middle">50000</text>
<text class="tick" x="834.2" y="660.9" text-anchor="middle">60000</text>
<text class="tick" x="578.1" y="651.1" text-anchor="end">0</text>
<text class="tick" x="578.1" y="625.8" text-anchor="end">2</text>
<text class="tick" x="578.1" y="601.6" text-anchor="end">4</text>
<text class="tick" x="578.1" y="577.3" text-anchor="end">6</text>
<rect x="764.0" y="568.9" width="13.6" height="10.4" fill="#fff" stroke="#c2c2c2" stroke-width="1"/>
<rect x="765.5" y="570.4" width="10.6" height="7.4" fill="#0000ff"/>
<text class="leg" x="781.1" y="578.0" fill="#999">aida03 1.8.H</text>
<path d="M857.3 551.2 L867.1 561.0 L857.3 570.9 L847.4 561.0 Z" fill="#ff0000"/>
<path d="M599.85 683.30 V768.20 M639.13 683.30 V768.20 M678.42 683.30 V768.20 M717.70 683.30 V768.20 M756.99 683.30 V768.20 M796.27 683.30 V768.20 M835.56 683.30 V768.20 M599.85 768.20 H857.30 M599.85 744.62 H857.30 M599.85 721.03 H857.30 M599.85 697.45 H857.30" stroke="#e6e6e6" stroke-width="0.9" fill="none"/>
<rect x="599.05" y="682.30" width="259.05" height="86.70" fill="none" stroke="#808080" stroke-width="1.6"/>
<path d="M599.85 768.20 L686.10 768.20 L686.10 758.77 L687.00 758.77 L687.00 768.20 L688.20 768.20 L688.20 758.77 L688.90 758.77 L688.90 768.20 L689.60 768.20 L689.60 768.20 L691.00 768.20 L691.00 758.77 L691.50 758.77 L691.50 768.20 L692.00 768.20 L692.00 758.77 L692.50 758.77 L692.50 768.20 L693.00 768.20 L693.00 758.77 L693.50 758.77 L693.50 768.20 L694.00 768.20 L694.00 768.20 L695.00 768.20 L695.00 758.77 L695.60 758.77 L695.60 768.20 L696.20 768.20 L696.20 758.77 L696.80 758.77 L696.80 768.20 L702.50 768.20 L702.50 758.77 L703.10 758.77 L703.10 768.20 L703.70 768.20 L703.70 758.77 L704.00 758.77 L704.00 768.20 L704.90 768.20 L704.90 758.77 L705.70 758.77 L705.70 768.20 L706.80 768.20 L706.80 758.77 L707.30 758.77 L707.30 768.20 L707.80 768.20 L707.80 758.77 L708.30 758.77 L708.30 768.20 L708.80 768.20 L708.80 758.77 L709.30 758.77 L709.30 768.20 L709.80 768.20 L709.80 758.77 L710.30 758.77 L710.30 768.20 L710.80 768.20 L710.80 758.77 L711.30 758.77 L711.30 768.20 L711.80 768.20 L711.80 758.77 L712.30 758.77 L712.30 758.77 L718.20 758.77 L718.20 749.33 L718.70 749.33 L718.70 758.77 L719.20 758.77 L719.20 749.33 L719.70 749.33 L719.70 758.77 L720.20 758.77 L720.20 749.33 L720.50 749.33 L720.50 739.90 L721.00 739.90 L721.00 749.33 L721.50 749.33 L721.50 739.90 L722.00 739.90 L722.00 749.33 L722.50 749.33 L722.50 739.90 L722.90 739.90 L722.90 739.90 L723.10 739.90 L723.10 730.47 L723.70 730.47 L723.70 739.90 L724.30 739.90 L724.30 730.47 L724.40 730.47 L724.40 721.03 L724.90 721.03 L724.90 730.47 L725.40 730.47 L725.40 721.03 L725.90 721.03 L725.90 730.47 L726.20 730.47 L726.20 683.30 L726.60 683.30 L726.60 768.20 L857.30 768.20" stroke="#1f1fff" stroke-width="0.85" fill="none" stroke-linejoin="miter"/>
<text class="tick" x="599.6" y="782.9" text-anchor="middle">0</text>
<text class="tick" x="638.8" y="782.9" text-anchor="middle">10000</text>
<text class="tick" x="678.1" y="782.9" text-anchor="middle">20000</text>
<text class="tick" x="717.4" y="782.9" text-anchor="middle">30000</text>
<text class="tick" x="756.7" y="782.9" text-anchor="middle">40000</text>
<text class="tick" x="796.0" y="782.9" text-anchor="middle">50000</text>
<text class="tick" x="835.3" y="782.9" text-anchor="middle">60000</text>
<text class="tick" x="595.1" y="773.1" text-anchor="end">0.0</text>
<text class="tick" x="595.1" y="748.5" text-anchor="end">2.5</text>
<text class="tick" x="595.1" y="724.9" text-anchor="end">5.0</text>
<text class="tick" x="595.1" y="701.4" text-anchor="end">7.5</text>
<rect x="764.0" y="690.9" width="13.6" height="10.4" fill="#fff" stroke="#c2c2c2" stroke-width="1"/>
<rect x="765.5" y="692.4" width="10.6" height="7.4" fill="#0000ff"/>
<text class="leg" x="781.1" y="700.0" fill="#999">aida14 1.8.H</text>
<path d="M857.3 673.2 L867.1 683.0 L857.3 692.9 L847.4 683.0 Z" fill="#ff0000"/>
<path d="M599.85 805.30 V890.20 M639.13 805.30 V890.20 M678.42 805.30 V890.20 M717.70 805.30 V890.20 M756.99 805.30 V890.20 M796.27 805.30 V890.20 M835.56 805.30 V890.20 M599.85 890.20 H857.30 M599.85 866.62 H857.30 M599.85 843.03 H857.30 M599.85 819.45 H857.30" stroke="#e6e6e6" stroke-width="0.9" fill="none"/>
<rect x="599.05" y="804.30" width="259.05" height="86.70" fill="none" stroke="#808080" stroke-width="1.6"/>
<path d="M599.85 890.20 L696.25 890.20 L696.25 880.77 L696.75 880.77 L696.75 890.20 L697.25 890.20 L697.25 880.77 L697.75 880.77 L697.75 890.20 L697.80 890.20 L697.80 890.20 L698.20 890.20 L698.20 880.77 L698.70 880.77 L698.70 890.20 L699.20 890.20 L699.20 880.77 L699.60 880.77 L699.60 890.20 L703.20 890.20 L703.20 880.77 L703.80 880.77 L703.80 890.20 L704.40 890.20 L704.40 880.77 L705.00 880.77 L705.00 890.20 L705.60 890.20 L705.60 880.77 L705.70 880.77 L705.70 890.20 L707.30 890.20 L707.30 880.77 L707.80 880.77 L707.80 890.20 L708.30 890.20 L708.30 880.77 L708.80 880.77 L708.80 890.20 L709.30 890.20 L709.30 880.77 L709.80 880.77 L709.80 890.20 L710.30 890.20 L710.30 880.77 L710.80 880.77 L710.80 890.20 L711.30 890.20 L711.30 880.77 L711.80 880.77 L711.80 890.20 L712.30 890.20 L712.30 880.77 L712.80 880.77 L712.80 890.20 L712.90 890.20 L712.90 890.20 L713.80 890.20 L713.80 880.77 L714.70 880.77 L714.70 890.20 L714.90 890.20 L714.90 880.77 L716.80 880.77 L716.80 871.33 L717.30 871.33 L717.30 880.77 L717.80 880.77 L717.80 871.33 L718.30 871.33 L718.30 880.77 L718.80 880.77 L718.80 871.33 L719.30 871.33 L719.30 880.77 L720.00 880.77 L720.00 861.90 L720.50 861.90 L720.50 871.33 L721.00 871.33 L721.00 861.90 L721.50 861.90 L721.50 871.33 L722.00 871.33 L722.00 861.90 L722.50 861.90 L722.50 871.33 L723.00 871.33 L723.00 861.90 L723.20 861.90 L723.20 861.90 L724.30 861.90 L724.30 852.47 L724.80 852.47 L724.80 861.90 L725.30 861.90 L725.30 852.47 L725.40 852.47 L725.40 843.03 L725.90 843.03 L725.90 852.47 L726.40 852.47 L726.40 805.30 L726.60 805.30 L726.60 890.20 L726.90 890.20 L726.90 880.77 L727.40 880.77 L727.40 890.20 L857.30 890.20" stroke="#1f1fff" stroke-width="0.85" fill="none" stroke-linejoin="miter"/>
<text class="tick" x="599.6" y="904.9" text-anchor="middle">0</text>
<text class="tick" x="638.8" y="904.9" text-anchor="middle">10000</text>
<text class="tick" x="678.1" y="904.9" text-anchor="middle">20000</text>
<text class="tick" x="717.4" y="904.9" text-anchor="middle">30000</text>
<text class="tick" x="756.7" y="904.9" text-anchor="middle">40000</text>
<text class="tick" x="796.0" y="904.9" text-anchor="middle">50000</text>
<text class="tick" x="835.3" y="904.9" text-anchor="middle">60000</text>
<text class="tick" x="595.1" y="895.1" text-anchor="end">0.0</text>
<text class="tick" x="595.1" y="870.5" text-anchor="end">2.5</text>
<text class="tick" x="595.1" y="846.9" text-anchor="end">5.0</text>
<text class="tick" x="595.1" y="823.4" text-anchor="end">7.5</text>
<rect x="764.0" y="812.9" width="13.6" height="10.4" fill="#fff" stroke="#c2c2c2" stroke-width="1"/>
<rect x="765.5" y="814.4" width="10.6" height="7.4" fill="#0000ff"/>
<text class="leg" x="781.1" y="822.0" fill="#999">aida07 1.8.H</text>
<path d="M857.3 795.2 L867.1 805.0 L857.3 814.9 L847.4 805.0 Z" fill="#ff0000"/>
<path d="M1062.85 439.30 V524.20 M1104.12 439.30 V524.20 M1145.39 439.30 V524.20 M1186.65 439.30 V524.20 M1227.92 439.30 V524.20 M1269.19 439.30 V524.20 M1310.46 439.30 V524.20 M1062.85 524.20 H1333.30 M1062.85 495.90 H1333.30 M1062.85 467.60 H1333.30 M1062.85 439.30 H1333.30" stroke="#e6e6e6" stroke-width="0.9" fill="none"/>
<rect x="1062.05" y="438.30" width="272.05" height="86.70" fill="none" stroke="#808080" stroke-width="1.6"/>
<path d="M1062.85 524.20 L1125.20 524.20 L1125.20 510.05 L1126.10 510.05 L1126.10 524.20 L1127.00 524.20 L1127.00 510.05 L1127.90 510.05 L1127.90 524.20 L1128.75 524.20 L1128.75 524.20 L1133.00 524.20 L1133.00 510.05 L1133.90 510.05 L1133.90 524.20 L1138.20 524.20 L1138.20 510.05 L1138.90 510.05 L1138.90 524.20 L1139.60 524.20 L1139.60 524.20 L1141.10 524.20 L1141.10 510.05 L1141.80 510.05 L1141.80 524.20 L1142.90 524.20 L1142.90 510.05 L1143.45 510.05 L1143.45 524.20 L1144.00 524.20 L1144.00 510.05 L1144.55 510.05 L1144.55 524.20 L1145.10 524.20 L1145.10 510.05 L1145.65 510.05 L1145.65 524.20 L1145.80 524.20 L1145.80 524.20 L1147.10 524.20 L1147.10 510.05 L1147.80 510.05 L1147.80 524.20 L1148.50 524.20 L1148.50 510.05 L1149.20 510.05 L1149.20 524.20 L1149.90 524.20 L1149.90 510.05 L1150.60 510.05 L1150.60 524.20 L1150.80 524.20 L1150.80 524.20 L1151.70 524.20 L1151.70 510.05 L1152.20 510.05 L1152.20 524.20 L1152.70 524.20 L1152.70 510.05 L1153.20 510.05 L1153.20 524.20 L1153.70 524.20 L1153.70 510.05 L1154.20 510.05 L1154.20 524.20 L1154.70 524.20 L1154.70 510.05 L1155.20 510.05 L1155.20 524.20 L1155.70 524.20 L1155.70 510.05 L1156.20 510.05 L1156.20 524.20 L1156.70 524.20 L1156.70 510.05 L1157.20 510.05 L1157.20 524.20 L1157.70 524.20 L1157.70 510.05 L1158.20 510.05 L1158.20 524.20 L1158.70 524.20 L1158.70 510.05 L1159.20 510.05 L1159.20 524.20 L1159.70 524.20 L1159.70 510.05 L1160.20 510.05 L1160.20 524.20 L1160.70 524.20 L1160.70 510.05 L1161.20 510.05 L1161.20 524.20 L1161.70 524.20 L1161.70 510.05 L1162.20 510.05 L1162.20 524.20 L1162.70 524.20 L1162.70 510.05 L1163.20 510.05 L1163.20 524.20 L1163.70 524.20 L1163.70 510.05 L1164.20 510.05 L1164.20 524.20 L1164.70 524.20 L1164.70 510.05 L1165.20 510.05 L1165.20 524.20 L1165.70 524.20 L1165.70 510.05 L1166.20 510.05 L1166.20 524.20 L1166.70 524.20 L1166.70 510.05 L1167.20 510.05 L1167.20 524.20 L1167.70 524.20 L1167.70 510.05 L1168.20 510.05 L1168.20 524.20 L1168.70 524.20 L1168.70 510.05 L1169.20 510.05 L1169.20 524.20 L1169.70 524.20 L1169.70 510.05 L1170.20 510.05 L1170.20 524.20 L1170.70 524.20 L1170.70 510.05 L1171.20 510.05 L1171.20 524.20 L1171.70 524.20 L1171.70 510.05 L1172.20 510.05 L1172.20 524.20 L1172.70 524.20 L1172.70 510.05 L1173.20 510.05 L1173.20 524.20 L1173.70 524.20 L1173.70 510.05 L1174.20 510.05 L1174.20 524.20 L1174.30 524.20 L1174.30 495.90 L1175.60 495.90 L1175.60 524.20 L1177.10 524.20 L1177.10 510.05 L1177.10 510.05 L1177.10 510.05 L1177.60 510.05 L1177.60 524.20 L1178.10 524.20 L1178.10 510.05 L1178.60 510.05 L1178.60 524.20 L1179.10 524.20 L1179.10 510.05 L1179.60 510.05 L1179.60 524.20 L1180.10 524.20 L1180.10 510.05 L1180.60 510.05 L1180.60 524.20 L1181.10 524.20 L1181.10 510.05 L1181.60 510.05 L1181.60 524.20 L1181.80 524.20 L1181.80 510.05 L1188.30 510.05 L1188.30 495.90 L1188.90 495.90 L1188.90 510.05 L1189.30 510.05 L1189.30 495.90 L1189.30 495.90 L1189.30 481.75 L1189.80 481.75 L1189.80 495.90 L1190.30 495.90 L1190.30 481.75 L1190.80 481.75 L1190.80 495.90 L1191.20 495.90 L1191.20 510.05 L1191.80 510.05 L1191.80 495.90 L1192.00 495.90 L1192.00 481.75 L1192.30 481.75 L1192.30 467.60 L1192.70 467.60 L1192.70 495.90 L1192.80 495.90 L1192.80 481.75 L1193.30 481.75 L1193.30 495.90 L1193.80 495.90 L1193.80 481.75 L1194.30 481.75 L1194.30 495.90 L1194.80 495.90 L1194.80 481.75 L1195.00 481.75 L1195.00 467.60 L1195.80 467.60 L1195.80 481.75 L1196.20 481.75 L1196.20 439.30 L1196.70 439.30 L1196.70 524.20 L1333.30 524.20" stroke="#1f1fff" stroke-width="0.85" fill="none" stroke-linejoin="miter"/>
<text class="tick" x="1062.5" y="538.9" text-anchor="middle">0</text>
<text class="tick" x="1103.8" y="538.9" text-anchor="middle">10000</text>
<text class="tick" x="1145.1" y="538.9" text-anchor="middle">20000</text>
<text class="tick" x="1186.4" y="538.9" text-anchor="middle">30000</text>
<text class="tick" x="1227.6" y="538.9" text-anchor="middle">40000</text>
<text class="tick" x="1268.9" y="538.9" text-anchor="middle">50000</text>
<text class="tick" x="1310.2" y="538.9" text-anchor="middle">60000</text>
<text class="tick" x="1054.3" y="529.1" text-anchor="end">0</text>
<text class="tick" x="1054.3" y="499.8" text-anchor="end">2</text>
<text class="tick" x="1054.3" y="471.5" text-anchor="end">4</text>
<text class="tick" x="1054.3" y="443.2" text-anchor="end">6</text>
<rect x="1240.0" y="446.9" width="13.6" height="10.4" fill="#fff" stroke="#c2c2c2" stroke-width="1"/>
<rect x="1241.5" y="448.4" width="10.6" height="7.4" fill="#0000ff"/>
<text class="leg" x="1257.1" y="456.0" fill="#999">aida05 1.8.H</text>
<path d="M1333.3 429.2 L1343.2 439.1 L1333.3 448.9 L1323.5 439.1 Z" fill="#ff0000"/>
<path d="M1062.85 561.30 V646.20 M1104.12 561.30 V646.20 M1145.39 561.30 V646.20 M1186.65 561.30 V646.20 M1227.92 561.30 V646.20 M1269.19 561.30 V646.20 M1310.46 561.30 V646.20 M1062.85 646.20 H1333.30 M1062.85 629.22 H1333.30 M1062.85 612.24 H1333.30 M1062.85 595.26 H1333.30 M1062.85 578.28 H1333.30 M1062.85 561.30 H1333.30" stroke="#e6e6e6" stroke-width="0.9" fill="none"/>
<rect x="1062.05" y="560.30" width="272.05" height="86.70" fill="none" stroke="#808080" stroke-width="1.6"/>
<path d="M1062.85 646.20 L1127.10 646.20 L1127.10 629.22 L1127.80 629.22 L1127.80 646.20 L1128.50 646.20 L1128.50 629.22 L1128.75 629.22 L1128.75 646.20 L1130.10 646.20 L1130.10 629.22 L1130.90 629.22 L1130.90 646.20 L1134.20 646.20 L1134.20 629.22 L1134.70 629.22 L1134.70 646.20 L1135.20 646.20 L1135.20 629.22 L1135.70 629.22 L1135.70 646.20 L1136.00 646.20 L1136.00 646.20 L1139.20 646.20 L1139.20 629.22 L1139.70 629.22 L1139.70 646.20 L1140.20 646.20 L1140.20 629.22 L1140.70 629.22 L1140.70 646.20 L1141.20 646.20 L1141.20 629.22 L1141.70 629.22 L1141.70 646.20 L1141.80 646.20 L1141.80 646.20 L1145.40 646.20 L1145.40 629.22 L1146.00 629.22 L1146.00 646.20 L1146.60 646.20 L1146.60 629.22 L1146.70 629.22 L1146.70 646.20 L1152.10 646.20 L1152.10 629.22 L1152.60 629.22 L1152.60 646.20 L1153.10 646.20 L1153.10 629.22 L1153.60 629.22 L1153.60 646.20 L1154.10 646.20 L1154.10 629.22 L1154.60 629.22 L1154.60 646.20 L1155.10 646.20 L1155.10 629.22 L1155.60 629.22 L1155.60 646.20 L1156.10 646.20 L1156.10 629.22 L1156.60 629.22 L1156.60 646.20 L1157.10 646.20 L1157.10 629.22 L1157.60 629.22 L1157.60 646.20 L1158.10 646.20 L1158.10 629.22 L1158.60 629.22 L1158.60 646.20 L1159.10 646.20 L1159.10 629.22 L1159.60 629.22 L1159.60 646.20 L1160.10 646.20 L1160.10 629.22 L1160.60 629.22 L1160.60 646.20 L1161.10 646.20 L1161.10 629.22 L1161.60 629.22 L1161.60 646.20 L1162.10 646.20 L1162.10 629.22 L1162.60 629.22 L1162.60 646.20 L1163.10 646.20 L1163.10 629.22 L1163.60 629.22 L1163.60 646.20 L1164.10 646.20 L1164.10 629.22 L1164.60 629.22 L1164.60 646.20 L1165.10 646.20 L1165.10 629.22 L1165.60 629.22 L1165.60 646.20 L1166.10 646.20 L1166.10 629.22 L1166.60 629.22 L1166.60 646.20 L1167.10 646.20 L1167.10 629.22 L1167.60 629.22 L1167.60 646.20 L1168.10 646.20 L1168.10 629.22 L1168.60 629.22 L1168.60 646.20 L1169.10 646.20 L1169.10 629.22 L1169.60 629.22 L1169.60 646.20 L1170.10 646.20 L1170.10 629.22 L1170.60 629.22 L1170.60 646.20 L1171.10 646.20 L1171.10 629.22 L1171.60 629.22 L1171.60 646.20 L1172.10 646.20 L1172.10 629.22 L1172.60 629.22 L1172.60 646.20 L1173.10 646.20 L1173.10 629.22 L1173.60 629.22 L1173.60 646.20 L1174.10 646.20 L1174.10 629.22 L1174.60 629.22 L1174.60 646.20 L1175.10 646.20 L1175.10 629.22 L1175.60 629.22 L1175.60 646.20 L1176.10 646.20 L1176.10 629.22 L1176.60 629.22 L1176.60 646.20 L1177.10 646.20 L1177.10 629.22 L1177.30 629.22 L1177.30 612.24 L1177.90 612.24 L1177.90 629.22 L1178.30 629.22 L1178.30 612.24 L1178.80 612.24 L1178.80 646.20 L1179.30 646.20 L1179.30 629.22 L1179.90 629.22 L1179.90 646.20 L1180.30 646.20 L1180.30 629.22 L1182.20 629.22 L1182.20 612.24 L1182.80 612.24 L1182.80 629.22 L1185.20 629.22 L1185.20 646.20 L1185.60 646.20 L1185.60 629.22 L1186.25 629.22 L1186.25 612.24 L1187.05 612.24 L1187.05 629.22 L1187.85 629.22 L1187.85 612.24 L1188.00 612.24 L1188.00 612.24 L1188.50 612.24 L1188.50 629.22 L1189.00 629.22 L1189.00 612.24 L1189.30 612.24 L1189.30 595.26 L1189.80 595.26 L1189.80 629.22 L1189.90 629.22 L1189.90 612.24 L1190.40 612.24 L1190.40 629.22 L1190.90 629.22 L1190.90 612.24 L1191.30 612.24 L1191.30 595.26 L1191.90 595.26 L1191.90 629.22 L1192.00 629.22 L1192.00 612.24 L1192.50 612.24 L1192.50 629.22 L1192.90 629.22 L1192.90 595.26 L1193.80 595.26 L1193.80 612.24 L1193.40 612.24 L1193.40 578.28 L1193.90 578.28 L1193.90 595.26 L1194.40 595.26 L1194.40 578.28 L1194.90 578.28 L1194.90 595.26 L1195.40 595.26 L1195.40 578.28 L1195.90 578.28 L1195.90 595.26 L1196.40 595.26 L1196.40 578.28 L1196.70 578.28 L1196.70 561.30 L1197.20 561.30 L1197.20 629.22 L1197.50 629.22 L1197.50 646.20 L1333.30 646.20" stroke="#1f1fff" stroke-width="0.85" fill="none" stroke-linejoin="miter"/>
<text class="tick" x="1062.5" y="660.9" text-anchor="middle">0</text>
<text class="tick" x="1103.8" y="660.9" text-anchor="middle">10000</text>
<text class="tick" x="1145.1" y="660.9" text-anchor="middle">20000</text>
<text class="tick" x="1186.4" y="660.9" text-anchor="middle">30000</text>
<text class="tick" x="1227.6" y="660.9" text-anchor="middle">40000</text>
<text class="tick" x="1268.9" y="660.9" text-anchor="middle">50000</text>
<text class="tick" x="1310.2" y="660.9" text-anchor="middle">60000</text>
<text class="tick" x="1054.3" y="651.1" text-anchor="end">0</text>
<text class="tick" x="1054.3" y="633.1" text-anchor="end">1</text>
<text class="tick" x="1054.3" y="616.1" text-anchor="end">2</text>
<text class="tick" x="1054.3" y="599.2" text-anchor="end">3</text>
<text class="tick" x="1054.3" y="582.2" text-anchor="end">4</text>
<text class="tick" x="1054.3" y="565.2" text-anchor="end">5</text>
<rect x="1240.0" y="568.9" width="13.6" height="10.4" fill="#fff" stroke="#c2c2c2" stroke-width="1"/>
<rect x="1241.5" y="570.4" width="10.6" height="7.4" fill="#0000ff"/>
<text class="leg" x="1257.1" y="578.0" fill="#999">aida12 1.8.H</text>
<path d="M1333.3 551.2 L1343.2 561.0 L1333.3 570.9 L1323.5 561.0 Z" fill="#ff0000"/>
<path d="M1068.60 683.30 V768.20 M1108.99 683.30 V768.20 M1149.38 683.30 V768.20 M1189.77 683.30 V768.20 M1230.16 683.30 V768.20 M1270.55 683.30 V768.20 M1310.94 683.30 V768.20 M1068.60 768.20 H1333.30 M1068.60 739.90 H1333.30 M1068.60 711.60 H1333.30 M1068.60 683.30 H1333.30" stroke="#e6e6e6" stroke-width="0.9" fill="none"/>
<rect x="1067.80" y="682.30" width="266.30" height="86.70" fill="none" stroke="#808080" stroke-width="1.6"/>
<path d="M1068.60 768.20 L1147.10 768.20 L1147.10 739.90 L1147.60 739.90 L1147.60 768.20 L1148.10 768.20 L1148.10 739.90 L1148.60 739.90 L1148.60 768.20 L1148.75 768.20 L1148.75 768.20 L1163.30 768.20 L1163.30 739.90 L1163.80 739.90 L1163.80 768.20 L1164.30 768.20 L1164.30 739.90 L1164.80 739.90 L1164.80 768.20 L1165.30 768.20 L1165.30 739.90 L1165.80 739.90 L1165.80 768.20 L1170.10 768.20 L1170.10 739.90 L1170.90 739.90 L1170.90 768.20 L1171.90 768.20 L1171.90 739.90 L1172.60 739.90 L1172.60 768.20 L1173.30 768.20 L1173.30 739.90 L1173.80 739.90 L1173.80 768.20 L1174.30 768.20 L1174.30 739.90 L1174.80 739.90 L1174.80 768.20 L1175.30 768.20 L1175.30 739.90 L1175.80 739.90 L1175.80 768.20 L1176.30 768.20 L1176.30 739.90 L1176.80 739.90 L1176.80 768.20 L1177.30 768.20 L1177.30 739.90 L1177.80 739.90 L1177.80 768.20 L1178.30 768.20 L1178.30 739.90 L1178.80 739.90 L1178.80 768.20 L1179.30 768.20 L1179.30 739.90 L1179.80 739.90 L1179.80 768.20 L1180.30 768.20 L1180.30 739.90 L1180.80 739.90 L1180.80 768.20 L1181.30 768.20 L1181.30 739.90 L1181.80 739.90 L1181.80 768.20 L1182.30 768.20 L1182.30 739.90 L1182.80 739.90 L1182.80 768.20 L1183.30 768.20 L1183.30 739.90 L1183.80 739.90 L1183.80 768.20 L1184.30 768.20 L1184.30 739.90 L1184.80 739.90 L1184.80 768.20 L1185.30 768.20 L1185.30 739.90 L1185.80 739.90 L1185.80 768.20 L1186.30 768.20 L1186.30 739.90 L1186.80 739.90 L1186.80 768.20 L1187.30 768.20 L1187.30 739.90 L1187.80 739.90 L1187.80 768.20 L1188.30 768.20 L1188.30 739.90 L1188.80 739.90 L1188.80 768.20 L1189.30 768.20 L1189.30 739.90 L1189.60 739.90 L1189.60 739.90 L1191.25 739.90 L1191.25 711.60 L1191.75 711.60 L1191.75 739.90 L1192.25 739.90 L1192.25 711.60 L1192.75 711.60 L1192.75 739.90 L1193.25 739.90 L1193.25 711.60 L1193.75 711.60 L1193.75 739.90 L1194.25 739.90 L1194.25 711.60 L1194.75 711.60 L1194.75 739.90 L1195.25 739.90 L1195.25 711.60 L1195.75 711.60 L1195.75 739.90 L1195.80 739.90 L1195.80 711.60 L1196.30 711.60 L1196.30 683.30 L1196.70 683.30 L1196.70 711.60 L1197.10 711.60 L1197.10 683.30 L1198.40 683.30 L1198.40 768.20 L1198.50 768.20 L1198.50 739.90 L1199.00 739.90 L1199.00 768.20 L1199.50 768.20 L1199.50 739.90 L1199.80 739.90 L1199.80 768.20 L1333.30 768.20" stroke="#1f1fff" stroke-width="0.85" fill="none" stroke-linejoin="miter"/>
<text class="tick" x="1068.3" y="782.9" text-anchor="middle">0</text>
<text class="tick" x="1108.7" y="782.9" text-anchor="middle">10000</text>
<text class="tick" x="1149.1" y="782.9" text-anchor="middle">20000</text>
<text class="tick" x="1189.5" y="782.9" text-anchor="middle">30000</text>
<text class="tick" x="1229.9" y="782.9" text-anchor="middle">40000</text>
<text class="tick" x="1270.3" y="782.9" text-anchor="middle">50000</text>
<text class="tick" x="1310.6" y="782.9" text-anchor="middle">60000</text>
<text class="tick" x="1064.6" y="773.1" text-anchor="end">0.0</text>
<text class="tick" x="1064.6" y="743.8" text-anchor="end">1.0</text>
<text class="tick" x="1064.6" y="715.5" text-anchor="end">2.0</text>
<text class="tick" x="1064.6" y="687.2" text-anchor="end">3.0</text>
<rect x="1240.0" y="690.9" width="13.6" height="10.4" fill="#fff" stroke="#c2c2c2" stroke-width="1"/>
<rect x="1241.5" y="692.4" width="10.6" height="7.4" fill="#0000ff"/>
<text class="leg" x="1257.1" y="700.0" fill="#999">aida13 1.8.H</text>
<path d="M1333.3 673.2 L1343.2 683.0 L1333.3 692.9 L1323.5 683.0 Z" fill="#ff0000"/>
<path d="M1062.85 805.30 V890.20 M1104.12 805.30 V890.20 M1145.39 805.30 V890.20 M1186.65 805.30 V890.20 M1227.92 805.30 V890.20 M1269.19 805.30 V890.20 M1310.46 805.30 V890.20 M1062.85 890.20 H1333.30 M1062.85 868.97 H1333.30 M1062.85 847.75 H1333.30 M1062.85 826.53 H1333.30 M1062.85 805.30 H1333.30" stroke="#d4d4d4" stroke-width="0.9" fill="none"/>
<rect x="1062.05" y="804.30" width="272.05" height="86.70" fill="none" stroke="#000000" stroke-width="1.6"/>
<path d="M1062.85 890.20 L1155.40 890.20 L1155.40 868.97 L1155.90 868.97 L1155.90 890.20 L1156.40 890.20 L1156.40 868.97 L1156.90 868.97 L1156.90 890.20 L1157.40 890.20 L1157.40 868.97 L1157.90 868.97 L1157.90 890.20 L1158.40 890.20 L1158.40 868.97 L1158.90 868.97 L1158.90 890.20 L1159.00 890.20 L1159.00 890.20 L1159.60 890.20 L1159.60 868.97 L1160.30 868.97 L1160.30 890.20 L1161.00 890.20 L1161.00 868.97 L1161.70 868.97 L1161.70 890.20 L1164.00 890.20 L1164.00 868.97 L1164.80 868.97 L1164.80 890.20 L1165.60 890.20 L1165.60 868.97 L1165.80 868.97 L1165.80 890.20 L1167.90 890.20 L1167.90 868.97 L1168.40 868.97 L1168.40 890.20 L1168.90 890.20 L1168.90 868.97 L1169.40 868.97 L1169.40 890.20 L1169.90 890.20 L1169.90 868.97 L1170.40 868.97 L1170.40 890.20 L1170.90 890.20 L1170.90 868.97 L1171.40 868.97 L1171.40 890.20 L1171.90 890.20 L1171.90 868.97 L1172.40 868.97 L1172.40 890.20 L1172.90 890.20 L1172.90 868.97 L1173.40 868.97 L1173.40 890.20 L1173.90 890.20 L1173.90 868.97 L1174.40 868.97 L1174.40 890.20 L1174.90 890.20 L1174.90 868.97 L1175.40 868.97 L1175.40 890.20 L1175.90 890.20 L1175.90 868.97 L1176.40 868.97 L1176.40 890.20 L1176.90 890.20 L1176.90 868.97 L1177.40 868.97 L1177.40 890.20 L1177.90 890.20 L1177.90 868.97 L1178.40 868.97 L1178.40 890.20 L1178.90 890.20 L1178.90 868.97 L1179.20 868.97 L1179.20 890.20 L1180.00 890.20 L1180.00 868.97 L1180.50 868.97 L1180.50 890.20 L1181.00 890.20 L1181.00 868.97 L1181.50 868.97 L1181.50 890.20 L1182.00 890.20 L1182.00 868.97 L1182.50 868.97 L1182.50 890.20 L1183.00 890.20 L1183.00 868.97 L1183.50 868.97 L1183.50 890.20 L1184.00 890.20 L1184.00 868.97 L1184.50 868.97 L1184.50 890.20 L1185.00 890.20 L1185.00 868.97 L1185.40 868.97 L1185.40 868.97 L1186.30 868.97 L1186.30 826.53 L1186.80 826.53 L1186.80 847.75 L1187.30 847.75 L1187.30 826.53 L1187.80 826.53 L1187.80 868.97 L1187.80 868.97 L1187.80 847.75 L1188.30 847.75 L1188.30 868.97 L1188.80 868.97 L1188.80 847.75 L1189.30 847.75 L1189.30 868.97 L1189.80 868.97 L1189.80 847.75 L1190.00 847.75 L1190.00 826.53 L1190.60 826.53 L1190.60 868.97 L1191.20 868.97 L1191.20 826.53 L1191.80 826.53 L1191.80 868.97 L1192.00 868.97 L1192.00 868.97 L1192.90 868.97 L1192.90 826.53 L1193.40 826.53 L1193.40 805.30 L1193.80 805.30 L1193.80 826.53 L1193.80 826.53 L1193.80 826.53 L1194.30 826.53 L1194.30 847.75 L1194.80 847.75 L1194.80 826.53 L1195.30 826.53 L1195.30 868.97 L1195.80 868.97 L1195.80 826.53 L1196.30 826.53 L1196.30 868.97 L1196.70 868.97 L1196.70 890.20 L1333.30 890.20" stroke="#1f1fff" stroke-width="0.85" fill="none" stroke-linejoin="miter"/>
<text class="tick" x="1062.5" y="904.9" text-anchor="middle">0</text>
<text class="tick" x="1103.8" y="904.9" text-anchor="middle">10000</text>
<text class="tick" x="1145.1" y="904.9" text-anchor="middle">20000</text>
<text class="tick" x="1186.4" y="904.9" text-anchor="middle">30000</text>
<text class="tick" x="1227.6" y="904.9" text-anchor="middle">40000</text>
<text class="tick" x="1268.9" y="904.9" text-anchor="middle">50000</text>
<text class="tick" x="1310.2" y="904.9" text-anchor="middle">60000</text>
<text class="tick" x="1054.3" y="895.1" text-anchor="end">0</text>
<text class="tick" x="1054.3" y="872.9" text-anchor="end">1</text>
<text class="tick" x="1054.3" y="851.6" text-anchor="end">2</text>
<text class="tick" x="1054.3" y="830.4" text-anchor="end">3</text>
<text class="tick" x="1054.3" y="809.2" text-anchor="end">4</text>
<rect x="1240.0" y="812.9" width="13.6" height="10.4" fill="#fff" stroke="#c2c2c2" stroke-width="1"/>
<rect x="1241.5" y="814.4" width="10.6" height="7.4" fill="#0000ff"/>
<text class="leg" x="1257.1" y="822.0" fill="#000">aida16 1.8.H</text>
<path d="M1333.3 795.2 L1343.2 805.0 L1333.3 814.9 L1323.5 805.0 Z" fill="#00ff00"/>
</svg>
</div>
</body></html>
